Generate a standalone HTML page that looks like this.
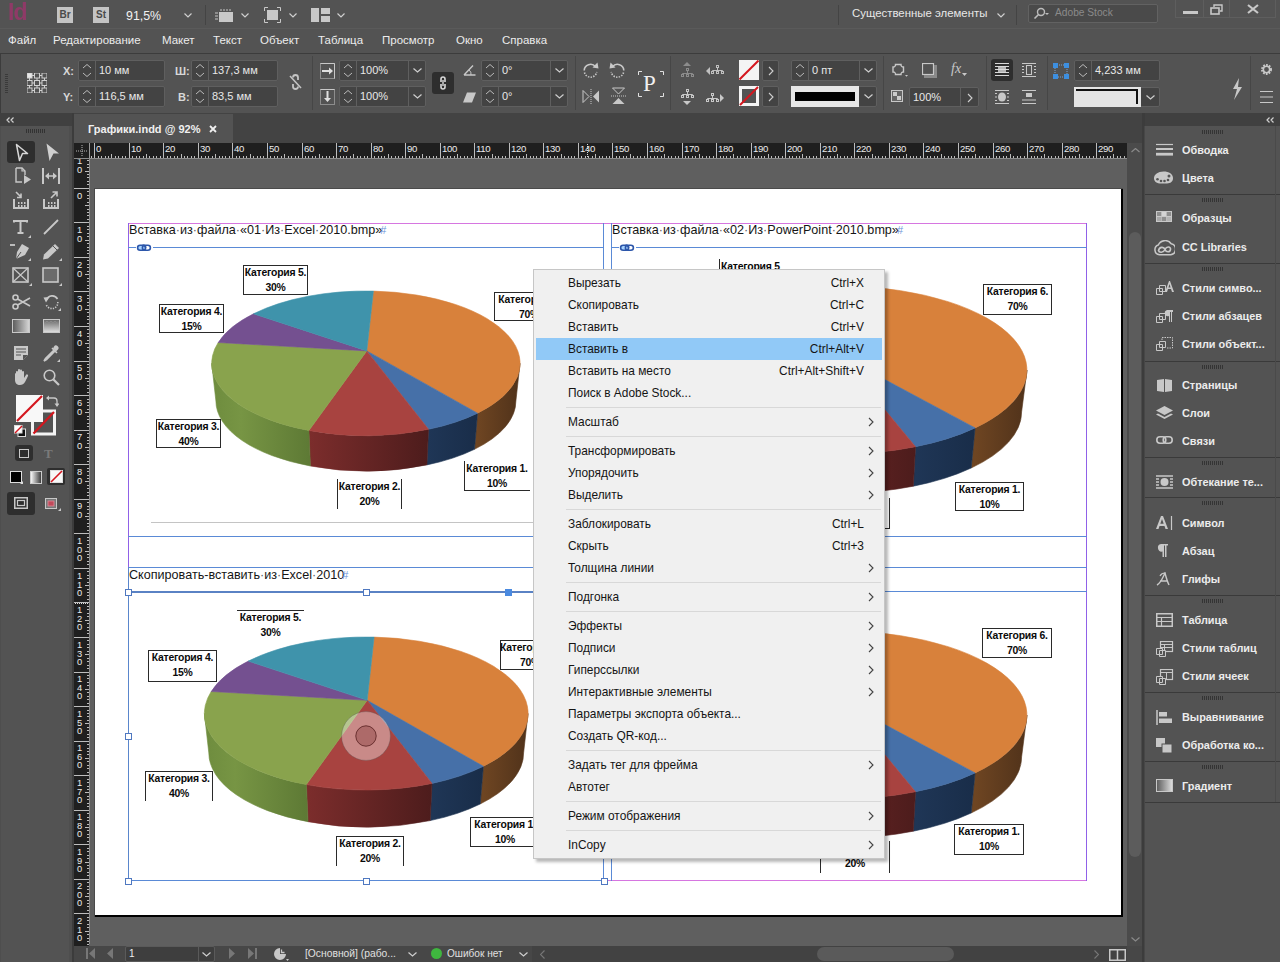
<!DOCTYPE html>
<html><head><meta charset="utf-8">
<style>
*{box-sizing:border-box}
html,body{margin:0;padding:0}
body{width:1280px;height:962px;overflow:hidden;position:relative;background:#535353;font-family:"Liberation Sans",sans-serif;color:#e6e6e6}
.a{position:absolute}
.t{position:absolute;white-space:nowrap;line-height:1}
</style></head><body>


<div class="a" style="left:0;top:0;width:1280px;height:28px;background:#535353"></div>
<div class="a" style="left:0;top:28px;width:1280px;height:1px;background:#5a5a5a"></div>
<div class="a" style="left:0;top:29px;width:1280px;height:24px;background:#535353"></div>
<div class="a" style="left:0;top:53px;width:1280px;height:1px;background:#3c3c3c"></div>
<div class="a" style="left:0;top:54px;width:1280px;height:59px;background:#535353"></div>

<div class="t" style="left:8px;top:1px;font-size:23px;font-weight:700;color:#96386a;opacity:0.9;letter-spacing:-1px;font-family:'Liberation Sans'">Id</div>
<div class="a" style="left:57px;top:7px;width:16px;height:16px;background:#c4c4c4"></div>
<div class="t" style="left:57px;top:10px;width:16px;text-align:center;font-size:10px;font-weight:700;color:#4a4a4a">Br</div>
<div class="a" style="left:93px;top:7px;width:16px;height:16px;background:#c4c4c4"></div>
<div class="t" style="left:93px;top:10px;width:16px;text-align:center;font-size:10px;font-weight:700;color:#4a4a4a">St</div>
<div class="t" style="left:126px;top:10px;font-size:12.4px;color:#f2f2f2">91,5%</div>
<svg class="a" style="left:184px;top:13px" width="8" height="5" viewBox="0 0 8 5"><path d="M0.5 0.5 L4.0 4 L7.5 0.5" fill="none" stroke="#cfcfcf" stroke-width="1.2"/></svg>
<div class="a" style="left:205px;top:5px;width:1px;height:20px;background:#444"></div>
<svg class="a" style="left:214px;top:7px" width="20" height="16" viewBox="0 0 20 16"><rect x="5" y="5" width="14" height="10" fill="#c8c8c8"/><path d="M7 2v2M10 2v2M13 2v2M16 2v2M1 6h3M1 9h3M1 12h3" stroke="#c8c8c8" stroke-width="1"/></svg>
<svg class="a" style="left:241px;top:13px" width="8" height="5" viewBox="0 0 8 5"><path d="M0.5 0.5 L4.0 4 L7.5 0.5" fill="none" stroke="#cfcfcf" stroke-width="1.2"/></svg>
<svg class="a" style="left:264px;top:7px" width="17" height="16" viewBox="0 0 17 16"><rect x="3" y="3" width="11" height="10" fill="#c8c8c8"/><path d="M0.5 4V0.5H4M13 0.5h3.5V4M16.5 12v3.5H13M4 15.5H0.5V12" fill="none" stroke="#c8c8c8"/></svg>
<svg class="a" style="left:289px;top:13px" width="8" height="5" viewBox="0 0 8 5"><path d="M0.5 0.5 L4.0 4 L7.5 0.5" fill="none" stroke="#cfcfcf" stroke-width="1.2"/></svg>
<svg class="a" style="left:311px;top:8px" width="19" height="14" viewBox="0 0 19 14"><rect x="0" y="0" width="8" height="14" fill="#c8c8c8"/><rect x="10" y="0" width="9" height="6" fill="#c8c8c8"/><rect x="10" y="8" width="9" height="6" fill="#c8c8c8"/></svg>
<svg class="a" style="left:337px;top:13px" width="8" height="5" viewBox="0 0 8 5"><path d="M0.5 0.5 L4.0 4 L7.5 0.5" fill="none" stroke="#cfcfcf" stroke-width="1.2"/></svg>
<div class="a" style="left:838px;top:5px;width:1px;height:20px;background:#444"></div>
<div class="t" style="left:852px;top:8px;font-size:11.4px;color:#e8e8e8">Существенные элементы</div>
<svg class="a" style="left:997px;top:13px" width="8" height="5" viewBox="0 0 8 5"><path d="M0.5 0.5 L4.0 4 L7.5 0.5" fill="none" stroke="#cfcfcf" stroke-width="1.2"/></svg>
<div class="a" style="left:1016px;top:5px;width:1px;height:20px;background:#444"></div>
<div class="a" style="left:1028px;top:4px;width:130px;height:19px;background:#4a4a4a;border:1px solid #626262;border-radius:2px"></div>
<svg class="a" style="left:1033px;top:7px" width="16" height="12" viewBox="0 0 16 12"><circle cx="8" cy="5" r="3.5" fill="none" stroke="#bdbdbd" stroke-width="1.4"/><path d="M5.5 7.5L1.5 11.5" stroke="#bdbdbd" stroke-width="1.6"/><path d="M12 6h4l-2 2z" fill="#bdbdbd"/></svg>
<div class="t" style="left:1055px;top:8px;font-size:10.2px;color:#8a8a8a">Adobe Stock</div>
<div class="a" style="left:1175px;top:-1px;width:101px;height:19px;border:1px solid #5e5e5e;background:#535353"></div>
<div class="a" style="left:1203px;top:0;width:1px;height:18px;background:#5e5e5e"></div>
<div class="a" style="left:1229px;top:0;width:1px;height:18px;background:#5e5e5e"></div>
<div class="a" style="left:1183px;top:11px;width:15px;height:3px;background:#c8c8c8"></div>
<svg class="a" style="left:1210px;top:4px" width="14" height="11" viewBox="0 0 14 11"><rect x="1" y="4" width="8" height="6" fill="none" stroke="#c8c8c8" stroke-width="1.6"/><path d="M4 3V1h8v6h-2" fill="none" stroke="#c8c8c8" stroke-width="1.4"/></svg>
<svg class="a" style="left:1247px;top:4px" width="12" height="10" viewBox="0 0 12 10"><path d="M1 1L11 9M11 1L1 9" stroke="#c8c8c8" stroke-width="2.2"/></svg>
<div class="t" style="left:8px;top:35px;font-size:11.5px;color:#ececec">Файл</div>
<div class="t" style="left:53px;top:35px;font-size:11.5px;color:#ececec">Редактирование</div>
<div class="t" style="left:162px;top:35px;font-size:11.5px;color:#ececec">Макет</div>
<div class="t" style="left:213px;top:35px;font-size:11.5px;color:#ececec">Текст</div>
<div class="t" style="left:260px;top:35px;font-size:11.5px;color:#ececec">Объект</div>
<div class="t" style="left:318px;top:35px;font-size:11.5px;color:#ececec">Таблица</div>
<div class="t" style="left:382px;top:35px;font-size:11.5px;color:#ececec">Просмотр</div>
<div class="t" style="left:456px;top:35px;font-size:11.5px;color:#ececec">Окно</div>
<div class="t" style="left:502px;top:35px;font-size:11.5px;color:#ececec">Справка</div>
<div class="a" style="left:0;top:54px;width:1px;height:59px;background:#3c3c3c"></div>
<div class="a" style="left:5px;top:74px;width:3px;height:19px;background:repeating-linear-gradient(#3a3a3a 0 1px,transparent 1px 2px)"></div>
<svg class="a" style="left:27px;top:73px" width="20" height="20" viewBox="0 0 20 20"><path d="M2.5 2.5H17.5M2.5 10H17.5M2.5 17.5H17.5M2.5 2.5V17.5M10 2.5V17.5M17.5 2.5V17.5" stroke="#d0d0d0" stroke-width="1"/><rect x="0.0" y="0.0" width="5" height="5" fill="#e8e8e8" stroke="#d0d0d0" stroke-width="1"/><rect x="0.0" y="7.5" width="5" height="5" fill="#535353" stroke="#d0d0d0" stroke-width="1"/><rect x="0.0" y="15.0" width="5" height="5" fill="#535353" stroke="#d0d0d0" stroke-width="1"/><rect x="7.5" y="0.0" width="5" height="5" fill="#535353" stroke="#d0d0d0" stroke-width="1"/><rect x="7.5" y="7.5" width="5" height="5" fill="#535353" stroke="#d0d0d0" stroke-width="1"/><rect x="7.5" y="15.0" width="5" height="5" fill="#535353" stroke="#d0d0d0" stroke-width="1"/><rect x="15.0" y="0.0" width="5" height="5" fill="#535353" stroke="#d0d0d0" stroke-width="1"/><rect x="15.0" y="7.5" width="5" height="5" fill="#535353" stroke="#d0d0d0" stroke-width="1"/><rect x="15.0" y="15.0" width="5" height="5" fill="#535353" stroke="#d0d0d0" stroke-width="1"/></svg>
<div class="t" style="left:63px;top:66px;font-size:11px;font-weight:700;color:#d8d8d8">X:</div>
<div class="t" style="left:63px;top:92px;font-size:11px;font-weight:700;color:#d8d8d8">Y:</div>
<div class="a" style="left:78px;top:60px;width:87px;height:21px;background:#434343;border:1px solid #5f5f5f;border-radius:2px"></div>
<div class="a" style="left:95px;top:60px;width:1px;height:21px;background:#5f5f5f"></div>
<svg class="a" style="left:82px;top:63px" width="10" height="15" viewBox="0 0 10 15"><path d="M1 5L5 1.5L9 5M1 10L5 13.5L9 10" fill="none" stroke="#bbb" stroke-width="1"/></svg>
<div class="t" style="left:99px;top:65px;font-size:11px;color:#e8e8e8">10 мм</div>
<div class="a" style="left:78px;top:86px;width:87px;height:21px;background:#434343;border:1px solid #5f5f5f;border-radius:2px"></div>
<div class="a" style="left:95px;top:86px;width:1px;height:21px;background:#5f5f5f"></div>
<svg class="a" style="left:82px;top:89px" width="10" height="15" viewBox="0 0 10 15"><path d="M1 5L5 1.5L9 5M1 10L5 13.5L9 10" fill="none" stroke="#bbb" stroke-width="1"/></svg>
<div class="t" style="left:99px;top:91px;font-size:11px;color:#e8e8e8">116,5 мм</div>
<div class="t" style="left:175px;top:66px;font-size:11px;font-weight:700;color:#d8d8d8">Ш:</div>
<div class="t" style="left:178px;top:92px;font-size:11px;font-weight:700;color:#d8d8d8">В:</div>
<div class="a" style="left:191px;top:60px;width:87px;height:21px;background:#434343;border:1px solid #5f5f5f;border-radius:2px"></div>
<div class="a" style="left:208px;top:60px;width:1px;height:21px;background:#5f5f5f"></div>
<svg class="a" style="left:195px;top:63px" width="10" height="15" viewBox="0 0 10 15"><path d="M1 5L5 1.5L9 5M1 10L5 13.5L9 10" fill="none" stroke="#bbb" stroke-width="1"/></svg>
<div class="t" style="left:212px;top:65px;font-size:11px;color:#e8e8e8">137,3 мм</div>
<div class="a" style="left:191px;top:86px;width:87px;height:21px;background:#434343;border:1px solid #5f5f5f;border-radius:2px"></div>
<div class="a" style="left:208px;top:86px;width:1px;height:21px;background:#5f5f5f"></div>
<svg class="a" style="left:195px;top:89px" width="10" height="15" viewBox="0 0 10 15"><path d="M1 5L5 1.5L9 5M1 10L5 13.5L9 10" fill="none" stroke="#bbb" stroke-width="1"/></svg>
<div class="t" style="left:212px;top:91px;font-size:11px;color:#e8e8e8">83,5 мм</div>
<svg class="a" style="left:288px;top:74px" width="15" height="16" viewBox="0 0 15 16"><path d="M5 3.5a2.5 2.5 0 0 1 5 0V6M10 12.5a2.5 2.5 0 0 1-5 0V10" fill="none" stroke="#c4c4c4" stroke-width="1.8"/><path d="M2 2L13 14" stroke="#c4c4c4" stroke-width="1.6"/></svg>
<div class="a" style="left:312px;top:56px;width:1px;height:54px;background:#464646"></div>
<svg class="a" style="left:320px;top:63px" width="15" height="16" viewBox="0 0 15 16"><rect x="0.5" y="0.5" width="14" height="15" fill="none" stroke="#c8c8c8" stroke-dasharray="1 1"/><path d="M0.5 0.5H14.5V15.5" fill="none" stroke="#c8c8c8"/><path d="M2 8H10" stroke="#e0e0e0" stroke-width="2"/><path d="M9 4.5L13 8L9 11.5z" fill="#e0e0e0"/></svg>
<svg class="a" style="left:320px;top:89px" width="15" height="16" viewBox="0 0 15 16"><rect x="0.5" y="0.5" width="14" height="15" fill="none" stroke="#c8c8c8" stroke-dasharray="1 1"/><path d="M0.5 0.5H14.5" fill="none" stroke="#c8c8c8"/><path d="M7.5 2V10" stroke="#e0e0e0" stroke-width="2"/><path d="M4 9L7.5 13L11 9z" fill="#e0e0e0"/></svg>
<div class="a" style="left:339px;top:60px;width:87px;height:21px;background:#434343;border:1px solid #5f5f5f;border-radius:2px"></div>
<div class="a" style="left:356px;top:60px;width:1px;height:21px;background:#5f5f5f"></div>
<svg class="a" style="left:343px;top:63px" width="10" height="15" viewBox="0 0 10 15"><path d="M1 5L5 1.5L9 5M1 10L5 13.5L9 10" fill="none" stroke="#bbb" stroke-width="1"/></svg>
<div class="a" style="left:408px;top:60px;width:1px;height:21px;background:#5f5f5f"></div>
<svg class="a" style="left:413px;top:68px" width="9" height="5" viewBox="0 0 9 5"><path d="M0.5 0.5 L4.5 4 L8.5 0.5" fill="none" stroke="#cfcfcf" stroke-width="1.2"/></svg>
<div class="t" style="left:360px;top:65px;font-size:11px;color:#e8e8e8">100%</div>
<div class="a" style="left:339px;top:86px;width:87px;height:21px;background:#434343;border:1px solid #5f5f5f;border-radius:2px"></div>
<div class="a" style="left:356px;top:86px;width:1px;height:21px;background:#5f5f5f"></div>
<svg class="a" style="left:343px;top:89px" width="10" height="15" viewBox="0 0 10 15"><path d="M1 5L5 1.5L9 5M1 10L5 13.5L9 10" fill="none" stroke="#bbb" stroke-width="1"/></svg>
<div class="a" style="left:408px;top:86px;width:1px;height:21px;background:#5f5f5f"></div>
<svg class="a" style="left:413px;top:94px" width="9" height="5" viewBox="0 0 9 5"><path d="M0.5 0.5 L4.5 4 L8.5 0.5" fill="none" stroke="#cfcfcf" stroke-width="1.2"/></svg>
<div class="t" style="left:360px;top:91px;font-size:11px;color:#e8e8e8">100%</div>
<div class="a" style="left:432px;top:72px;width:22px;height:22px;background:#2e2e2e;border-radius:3px"></div>
<svg class="a" style="left:438px;top:75px" width="10" height="16" viewBox="0 0 10 16"><path d="M3 7V4a2 2 0 0 1 4 0V7M3 9v3a2 2 0 0 0 4 0V9" fill="none" stroke="#d8d8d8" stroke-width="1.6"/><path d="M5 5V11" stroke="#d8d8d8" stroke-width="1.4"/></svg>
<svg class="a" style="left:463px;top:64px" width="13" height="12" viewBox="0 0 13 12"><path d="M1 11H12.5M1 11L10 1.5" fill="none" stroke="#c8c8c8" stroke-width="1.4"/><path d="M6 6a5 5 0 0 1 2 5" fill="none" stroke="#c8c8c8" stroke-width="1"/></svg>
<svg class="a" style="left:463px;top:92px" width="13" height="11" viewBox="0 0 13 11"><path d="M4 0.5H13L9 10.5H0z" fill="#c8c8c8"/></svg>
<div class="a" style="left:481px;top:60px;width:87px;height:21px;background:#434343;border:1px solid #5f5f5f;border-radius:2px"></div>
<div class="a" style="left:498px;top:60px;width:1px;height:21px;background:#5f5f5f"></div>
<svg class="a" style="left:485px;top:63px" width="10" height="15" viewBox="0 0 10 15"><path d="M1 5L5 1.5L9 5M1 10L5 13.5L9 10" fill="none" stroke="#bbb" stroke-width="1"/></svg>
<div class="a" style="left:550px;top:60px;width:1px;height:21px;background:#5f5f5f"></div>
<svg class="a" style="left:555px;top:68px" width="9" height="5" viewBox="0 0 9 5"><path d="M0.5 0.5 L4.5 4 L8.5 0.5" fill="none" stroke="#cfcfcf" stroke-width="1.2"/></svg>
<div class="t" style="left:502px;top:65px;font-size:11px;color:#e8e8e8">0°</div>
<div class="a" style="left:481px;top:86px;width:87px;height:21px;background:#434343;border:1px solid #5f5f5f;border-radius:2px"></div>
<div class="a" style="left:498px;top:86px;width:1px;height:21px;background:#5f5f5f"></div>
<svg class="a" style="left:485px;top:89px" width="10" height="15" viewBox="0 0 10 15"><path d="M1 5L5 1.5L9 5M1 10L5 13.5L9 10" fill="none" stroke="#bbb" stroke-width="1"/></svg>
<div class="a" style="left:550px;top:86px;width:1px;height:21px;background:#5f5f5f"></div>
<svg class="a" style="left:555px;top:94px" width="9" height="5" viewBox="0 0 9 5"><path d="M0.5 0.5 L4.5 4 L8.5 0.5" fill="none" stroke="#cfcfcf" stroke-width="1.2"/></svg>
<div class="t" style="left:502px;top:91px;font-size:11px;color:#e8e8e8">0°</div>
<div class="a" style="left:575px;top:56px;width:1px;height:54px;background:#464646"></div>
<svg class="a" style="left:582px;top:62px" width="17" height="17" viewBox="0 0 17 17"><path d="M2.2 8.5A6.3 6.3 0 0 1 13.5 4.8" fill="none" stroke="#c8c8c8" stroke-width="1.6"/><path d="M2.5 10.5A6.3 6.3 0 0 0 14.8 10" fill="none" stroke="#c8c8c8" stroke-width="1.6" stroke-dasharray="1.4 1.3"/><path d="M10.5 5.5L16.5 6.5L15.5 0.5z" fill="#c8c8c8"/></svg>
<svg class="a" style="left:609px;top:62px" width="17" height="17" viewBox="0 0 17 17"><path d="M14.8 8.5A6.3 6.3 0 0 0 3.5 4.8" fill="none" stroke="#c8c8c8" stroke-width="1.6"/><path d="M14.5 10.5A6.3 6.3 0 0 1 2.2 10" fill="none" stroke="#c8c8c8" stroke-width="1.6" stroke-dasharray="1.4 1.3"/><path d="M6.5 5.5L0.5 6.5L1.5 0.5z" fill="#c8c8c8"/></svg>
<svg class="a" style="left:582px;top:89px" width="18" height="15" viewBox="0 0 18 15"><path d="M1 1.5L7 7.5L1 13.5z" fill="none" stroke="#c8c8c8" stroke-width="1"/><path d="M17 1.5L11 7.5L17 13.5z" fill="#c8c8c8"/><path d="M9 0V15" stroke="#c8c8c8" stroke-dasharray="1 1"/></svg>
<svg class="a" style="left:611px;top:87px" width="15" height="18" viewBox="0 0 15 18"><path d="M1.5 1L7.5 7L13.5 1z" fill="none" stroke="#c8c8c8" stroke-width="1"/><path d="M1.5 17L7.5 11L13.5 17z" fill="#c8c8c8"/><path d="M0 9H15" stroke="#c8c8c8" stroke-dasharray="1 1"/></svg>
<svg class="a" style="left:638px;top:71px" width="26" height="26" viewBox="0 0 26 26"><path d="M0.5 4V0.5H4M22 0.5H25.5V4M25.5 22V25.5H22M4 25.5H0.5V22" fill="none" stroke="#e0e0e0" stroke-width="1"/></svg>
<div class="t" style="left:643px;top:72px;font-family:'Liberation Serif';font-size:23px;color:#f0f0f0">P</div>
<div class="a" style="left:670px;top:56px;width:1px;height:54px;background:#464646"></div>
<svg class="a" style="left:670px;top:55px" width="60" height="55" viewBox="670 55 60 55"><path d="M683 66L687 62L691 66z" fill="#8c8c8c"/><g fill="none" stroke="#8c8c8c" stroke-width="1"><rect x="686.5" y="68.5" width="2" height="2"/><path d="M687.5 71V73M682.5 74V73.5H692.5V74"/><rect x="681.5" y="74.5" width="2" height="2"/><rect x="686.5" y="74.5" width="2" height="2"/><rect x="691.5" y="74.5" width="2" height="2"/></g><path d="M710 67L706 71L710 75z" fill="#c0c0c0"/><g fill="none" stroke="#c0c0c0" stroke-width="1"><rect x="716.5" y="65.5" width="2" height="2"/><path d="M717.5 68V70M712.5 71V70.5H722.5V71"/><rect x="711.5" y="71.5" width="2" height="2"/><rect x="716.5" y="71.5" width="2" height="2"/><rect x="721.5" y="71.5" width="2" height="2"/></g><g fill="none" stroke="#c8c8c8" stroke-width="1"><rect x="686.5" y="89.5" width="2" height="2"/><path d="M687.5 92V94M682.5 95V94.5H692.5V95"/><rect x="681.5" y="95.5" width="2" height="2"/><rect x="686.5" y="95.5" width="2" height="2"/><rect x="691.5" y="95.5" width="2" height="2"/></g><path d="M683 101L687 105L691 101z" fill="#c8c8c8"/><g fill="none" stroke="#c8c8c8" stroke-width="1"><rect x="711.5" y="93.5" width="2" height="2"/><path d="M712.5 96V98M707.5 99V98.5H717.5V99"/><rect x="706.5" y="99.5" width="2" height="2"/><rect x="711.5" y="99.5" width="2" height="2"/><rect x="716.5" y="99.5" width="2" height="2"/></g><path d="M720 94L724 98L720 102z" fill="#c8c8c8"/></svg>
<svg class="a" style="left:739px;top:60px" width="20" height="20" viewBox="0 0 20 20"><rect x="0" y="0" width="20" height="20" fill="#f4f4f4"/><path d="M0.5 19.5L19.5 0.5" stroke="#d4161e" stroke-width="2"/></svg>
<svg class="a" style="left:739px;top:86px" width="20" height="20" viewBox="0 0 20 20"><rect x="1.5" y="1.5" width="17" height="17" fill="#535353" stroke="#f4f4f4" stroke-width="3"/><path d="M1 19L19 1" stroke="#d4161e" stroke-width="2"/></svg>
<div class="a" style="left:762px;top:60px;width:17px;height:21px;background:#434343;border:1px solid #5f5f5f;border-radius:2px"></div>
<svg class="a" style="left:768px;top:66px" width="6" height="10" viewBox="0 0 6 10"><path d="M1 1L5 5L1 9" fill="none" stroke="#cfcfcf" stroke-width="1.1"/></svg>
<div class="a" style="left:762px;top:86px;width:17px;height:21px;background:#434343;border:1px solid #5f5f5f;border-radius:2px"></div>
<svg class="a" style="left:768px;top:92px" width="6" height="10" viewBox="0 0 6 10"><path d="M1 1L5 5L1 9" fill="none" stroke="#cfcfcf" stroke-width="1.1"/></svg>
<div class="a" style="left:791px;top:60px;width:86px;height:21px;background:#434343;border:1px solid #5f5f5f;border-radius:2px"></div>
<div class="a" style="left:808px;top:60px;width:1px;height:21px;background:#5f5f5f"></div>
<svg class="a" style="left:795px;top:63px" width="10" height="15" viewBox="0 0 10 15"><path d="M1 5L5 1.5L9 5M1 10L5 13.5L9 10" fill="none" stroke="#bbb" stroke-width="1"/></svg>
<div class="a" style="left:859px;top:60px;width:1px;height:21px;background:#5f5f5f"></div>
<svg class="a" style="left:864px;top:68px" width="9" height="5" viewBox="0 0 9 5"><path d="M0.5 0.5 L4.5 4 L8.5 0.5" fill="none" stroke="#cfcfcf" stroke-width="1.2"/></svg>
<div class="t" style="left:812px;top:65px;font-size:11px;color:#e8e8e8">0 пт</div>
<div class="a" style="left:791px;top:86px;width:86px;height:21px;background:#434343;border:1px solid #5f5f5f;border-radius:2px"></div>
<div class="a" style="left:791px;top:86px;width:68px;height:21px;background:#e6e6e6"></div>
<div class="a" style="left:795px;top:92px;width:60px;height:9px;background:#000"></div>
<svg class="a" style="left:864px;top:94px" width="9" height="5" viewBox="0 0 9 5"><path d="M0.5 0.5 L4.5 4 L8.5 0.5" fill="none" stroke="#cfcfcf" stroke-width="1.2"/></svg>
<div class="a" style="left:883px;top:56px;width:1px;height:54px;background:#464646"></div>
<svg class="a" style="left:892px;top:63px" width="17" height="14" viewBox="0 0 17 14"><path d="M3.5 1.5H9A2.2 2.2 0 0 0 11.5 4V9A2.2 2.2 0 0 0 9 11.5H3.5A2.2 2.2 0 0 0 1 9V4A2.2 2.2 0 0 0 3.5 1.5z" fill="none" stroke="#c8c8c8" stroke-width="1.4"/><path d="M13 12h3l-1.5 1.8z" fill="#c8c8c8"/></svg>
<svg class="a" style="left:922px;top:63px" width="15" height="15" viewBox="0 0 15 15"><rect x="0.5" y="0.5" width="11" height="11" fill="none" stroke="#c8c8c8" stroke-width="1.2"/><rect x="2" y="12" width="13" height="3" fill="#8a8a8a"/><rect x="12" y="2" width="3" height="13" fill="#8a8a8a"/></svg>
<div class="t" style="left:951px;top:62px;font-family:'Liberation Serif';font-style:italic;font-size:14px;color:#c8c8c8">fx</div>
<svg class="a" style="left:962px;top:73px" width="5" height="3"><path d="M0 0h5l-2.5 3z" fill="#c8c8c8"/></svg>
<svg class="a" style="left:891px;top:90px" width="12" height="12" viewBox="0 0 12 12"><rect x="0.5" y="0.5" width="11" height="11" fill="#666" stroke="#c8c8c8"/><rect x="2" y="2" width="4" height="4" fill="#ccc"/><rect x="6" y="6" width="4" height="4" fill="#ccc"/></svg>
<div class="a" style="left:909px;top:87px;width:70px;height:20px;background:#434343;border:1px solid #5f5f5f;border-radius:2px"></div>
<div class="a" style="left:960px;top:87px;width:1px;height:20px;background:#5f5f5f"></div>
<svg class="a" style="left:967px;top:93px" width="6" height="10" viewBox="0 0 6 10"><path d="M1 1L5 5L1 9" fill="none" stroke="#cfcfcf" stroke-width="1.1"/></svg>
<div class="t" style="left:913px;top:92px;font-size:11px;color:#e8e8e8">100%</div>
<div class="a" style="left:986px;top:56px;width:1px;height:54px;background:#464646"></div>
<div class="a" style="left:991px;top:59px;width:22px;height:22px;background:#2e2e2e;border-radius:3px"></div>
<svg class="a" style="left:994px;top:62px" width="16" height="16" viewBox="0 0 16 16"><path d="M1 1.5H15M1 4.5H15M1 7.5H15M1 10.5H15M1 13.5H15" stroke="#d8d8d8" stroke-width="1"/><rect x="4" y="5" width="8" height="5" fill="#d8d8d8" opacity="0.8"/></svg>
<svg class="a" style="left:1021px;top:62px" width="16" height="16" viewBox="0 0 16 16"><path d="M1 1.5H15M1 14.5H15M1 4.5H3M1 7.5H3M1 10.5H3M13 4.5H15M13 7.5H15M13 10.5H15" stroke="#c8c8c8" stroke-width="1"/><rect x="5.5" y="3.5" width="5" height="9" fill="none" stroke="#c8c8c8"/></svg>
<svg class="a" style="left:994px;top:89px" width="16" height="16" viewBox="0 0 16 16"><path d="M1 1.5H15M1 14.5H15M1 4.5H3M1 8H3M1 11.5H3M13 4.5H15M13 8H15M13 11.5H15" stroke="#c8c8c8" stroke-width="1"/><ellipse cx="8" cy="8" rx="4" ry="4.5" fill="#c8c8c8"/></svg>
<svg class="a" style="left:1021px;top:89px" width="16" height="16" viewBox="0 0 16 16"><path d="M1 1.5H15M1 11H15M1 14.5H15" stroke="#c8c8c8" stroke-width="1"/><rect x="5" y="4" width="6" height="4" fill="#c8c8c8"/></svg>
<div class="a" style="left:1047px;top:56px;width:1px;height:54px;background:#464646"></div>
<svg class="a" style="left:1053px;top:63px" width="16" height="16" viewBox="0 0 16 16"><path d="M2 2H14V14H2z" fill="none" stroke="#7aa6d6" stroke-dasharray="1 1"/><rect x="0" y="0" width="5" height="5" fill="#3d8fe0"/><rect x="11" y="0" width="5" height="5" fill="#3d8fe0"/><rect x="0" y="11" width="5" height="5" fill="#3d8fe0"/><rect x="11" y="11" width="5" height="5" fill="#3d8fe0"/></svg>
<div class="a" style="left:1074px;top:60px;width:86px;height:21px;background:#434343;border:1px solid #5f5f5f;border-radius:2px"></div>
<div class="a" style="left:1091px;top:60px;width:1px;height:21px;background:#5f5f5f"></div>
<svg class="a" style="left:1078px;top:63px" width="10" height="15" viewBox="0 0 10 15"><path d="M1 5L5 1.5L9 5M1 10L5 13.5L9 10" fill="none" stroke="#bbb" stroke-width="1"/></svg>
<div class="t" style="left:1095px;top:65px;font-size:11px;color:#e8e8e8">4,233 мм</div>
<div class="a" style="left:1074px;top:87px;width:86px;height:20px;background:#434343;border:1px solid #5f5f5f;border-radius:2px"></div>
<div class="a" style="left:1074px;top:87px;width:67px;height:20px;background:#e4e4e4"></div>
<div class="a" style="left:1076px;top:89px;width:62px;height:2px;background:#111"></div>
<div class="a" style="left:1136px;top:89px;width:2px;height:15px;background:#111"></div>
<svg class="a" style="left:1146px;top:95px" width="9" height="5" viewBox="0 0 9 5"><path d="M0.5 0.5 L4.5 4 L8.5 0.5" fill="none" stroke="#cfcfcf" stroke-width="1.2"/></svg>
<svg class="a" style="left:1231px;top:78px" width="12" height="22" viewBox="0 0 12 22"><path d="M8 0L2 11H6L3 22L11 9H7z" fill="#c8c8c8"/></svg>
<div class="a" style="left:1250px;top:56px;width:1px;height:54px;background:#464646"></div>
<svg class="a" style="left:1260px;top:63px" width="13" height="13" viewBox="0 0 13 13"><circle cx="6.5" cy="6.5" r="4.2" fill="none" stroke="#c8c8c8" stroke-width="2.6" stroke-dasharray="1.6 1.1"/><circle cx="6.5" cy="6.5" r="3.2" fill="none" stroke="#c8c8c8" stroke-width="1.6"/></svg>
<svg class="a" style="left:1260px;top:90px" width="13" height="14" viewBox="0 0 13 14"><path d="M0 1.5H13M0 7H13M0 12.5H13" stroke="#c8c8c8" stroke-width="1.2"/></svg>
<div class="a" style="left:72px;top:113px;width:1073px;height:30px;background:#434343"></div>
<div class="a" style="left:74px;top:114px;width:159px;height:29px;background:#535353"></div>
<div class="t" style="left:88px;top:124px;font-size:11px;font-weight:700;color:#f0f0f0">Графики.indd @ 92%</div>
<svg class="a" style="left:209px;top:125px" width="8" height="8" viewBox="0 0 8 8"><path d="M1 1L7 7M7 1L1 7" stroke="#f0f0f0" stroke-width="1.8"/></svg>
<div class="a" style="left:0;top:113px;width:72px;height:849px;background:#4e4e4e"></div>
<div class="a" style="left:1px;top:126px;width:68px;height:836px;background:#535353"></div>
<div class="a" style="left:0;top:113px;width:72px;height:13px;background:#404040"></div>
<svg class="a" style="left:6px;top:117px" width="8" height="6" viewBox="0 0 8 6"><path d="M3.5 0.5L1 3L3.5 5.5M7.5 0.5L5 3L7.5 5.5" fill="none" stroke="#d0d0d0" stroke-width="1.2"/></svg>
<div class="a" style="left:72px;top:113px;width:2px;height:849px;background:#3c3c3c"></div>
<div class="a" style="left:26px;top:129px;width:20px;height:4px;background:repeating-linear-gradient(90deg,#333 0 1px,transparent 1px 2px)"></div>
<div class="a" style="left:7px;top:141px;width:28px;height:22px;background:#2e2e2e;border-radius:3px"></div>
<svg class="a" style="left:15px;top:143px" width="14" height="19" viewBox="0 0 14 19"><path d="M1.5 1.5L12.5 10.5H7.5L4.5 17.5L1.5 1.5z" fill="none" stroke="#d8d8d8" stroke-width="1.5" stroke-linejoin="round"/></svg>
<svg class="a" style="left:46px;top:143px" width="14" height="19" viewBox="0 0 14 19"><path d="M0.5 0.5L13 10.5H7.5L3.5 18z" fill="#d0d0d0"/></svg>
<svg class="a" style="left:15px;top:167px" width="16" height="17" viewBox="0 0 16 17"><path d="M1 1H7L10 4V8M7 15H1V1" fill="none" stroke="#c8c8c8" stroke-width="1.4"/><path d="M7 1V4H10" fill="none" stroke="#c8c8c8" stroke-width="1.2"/><path d="M9 8L16 12.5L9 17z" fill="#c8c8c8"/></svg>
<svg class="a" style="left:42px;top:168px" width="18" height="16" viewBox="0 0 18 16"><path d="M1 0V16M17 0V16" stroke="#c8c8c8" stroke-width="2"/><path d="M4 8H14" stroke="#c8c8c8" stroke-width="1.5"/><path d="M3 8L7 4.5V11.5zM15 8L11 4.5V11.5z" fill="#c8c8c8"/></svg>
<svg class="a" style="left:13px;top:191px" width="16" height="18" viewBox="0 0 16 18"><path d="M1 8V17H15V8" fill="none" stroke="#c8c8c8" stroke-width="2"/><path d="M5 12h1.5M8 12h1.5M11 12h1.5M5 15h1.5M8 15h1.5M11 15h1.5" stroke="#c8c8c8" stroke-width="1.8"/><path d="M3 1L8 6M8 2.5V6.5H4" fill="none" stroke="#c8c8c8" stroke-width="1.6"/></svg>
<svg class="a" style="left:43px;top:191px" width="16" height="18" viewBox="0 0 16 18"><path d="M1 8V17H15V8" fill="none" stroke="#c8c8c8" stroke-width="2"/><path d="M5 12h1.5M8 12h1.5M11 12h1.5M5 15h1.5M8 15h1.5M11 15h1.5" stroke="#c8c8c8" stroke-width="1.8"/><path d="M8 7L14 1M9.5 1H14V5.5" fill="none" stroke="#c8c8c8" stroke-width="1.6"/></svg>
<svg class="a" style="left:13px;top:220px" width="20" height="18" viewBox="0 0 20 18"><path d="M1 2.5V1H14V2.5M7.5 1V13M4.5 13H10.5" fill="none" stroke="#c8c8c8" stroke-width="2"/><path d="M18 15V18H15z" fill="#c8c8c8"/></svg>
<svg class="a" style="left:43px;top:219px" width="16" height="16" viewBox="0 0 16 16"><path d="M1 15L15 1" stroke="#c8c8c8" stroke-width="1.8"/></svg>
<svg class="a" style="left:10px;top:243px" width="23" height="18" viewBox="0 0 23 18"><path d="M0 2H5" stroke="#c8c8c8" stroke-width="1.8"/><path d="M12 1L19 5L15 12L6 16L7 9z" fill="#c8c8c8"/><path d="M6 16L11 9" stroke="#535353" stroke-width="1"/><path d="M21 15V18H18z" fill="#c8c8c8"/></svg>
<svg class="a" style="left:42px;top:243px" width="20" height="18" viewBox="0 0 20 18"><path d="M13 1L17 5L6 15.5L1 16.5L2 11.5z" fill="#c8c8c8"/><path d="M11 3L15 7" stroke="#535353" stroke-width="1"/><path d="M20 15V18H17z" fill="#c8c8c8"/></svg>
<svg class="a" style="left:12px;top:267px" width="21" height="19" viewBox="0 0 21 19"><rect x="1" y="1" width="15" height="14" fill="none" stroke="#c8c8c8" stroke-width="1.6"/><path d="M1 1L16 15M16 1L1 15" stroke="#c8c8c8" stroke-width="1.2"/><path d="M20 16V19H17z" fill="#c8c8c8"/></svg>
<svg class="a" style="left:42px;top:267px" width="21" height="19" viewBox="0 0 21 19"><rect x="1" y="1" width="15" height="14" fill="#6b6b6b" stroke="#c8c8c8" stroke-width="1.6"/><path d="M20 16V19H17z" fill="#c8c8c8"/></svg>
<svg class="a" style="left:12px;top:294px" width="19" height="16" viewBox="0 0 19 16"><circle cx="3.5" cy="3.5" r="2.5" fill="none" stroke="#c8c8c8" stroke-width="1.6"/><circle cx="3.5" cy="12.5" r="2.5" fill="none" stroke="#c8c8c8" stroke-width="1.6"/><path d="M5.5 5L18 12M5.5 11L18 4" stroke="#c8c8c8" stroke-width="1.6"/></svg>
<svg class="a" style="left:43px;top:294px" width="19" height="17" viewBox="0 0 19 17"><path d="M3.5 6A6 6 0 0 1 14.5 5" fill="none" stroke="#c8c8c8" stroke-width="1.6"/><path d="M14.8 8A6 6 0 0 1 3 10" fill="none" stroke="#c8c8c8" stroke-width="1.6" stroke-dasharray="1.3 1.2"/><path d="M0.5 3.5L6.5 3L3 8.5z" fill="#c8c8c8"/><path d="M18 14V17H15z" fill="#c8c8c8"/></svg>
<svg class="a" style="left:12px;top:319px" width="18" height="14" viewBox="0 0 18 14"><defs><linearGradient id="tg1" x1="0" x2="1"><stop offset="0" stop-color="#5a5a5a"/><stop offset="1" stop-color="#d8d8d8"/></linearGradient></defs><rect x="0.5" y="0.5" width="17" height="13" fill="url(#tg1)" stroke="#c8c8c8"/></svg>
<svg class="a" style="left:43px;top:319px" width="17" height="14" viewBox="0 0 17 14"><defs><linearGradient id="tg2" x1="0" x2="0" y1="0" y2="1"><stop offset="0" stop-color="#666"/><stop offset="1" stop-color="#e0e0e0"/></linearGradient></defs><rect x="0.5" y="0.5" width="16" height="13" fill="url(#tg2)" stroke="#c8c8c8"/><path d="M2 4l2-2 2 2 2-2 2 2 2-2 2 2" fill="none" stroke="#888" stroke-width="1"/></svg>
<svg class="a" style="left:14px;top:346px" width="15" height="14" viewBox="0 0 15 14"><path d="M0 0H14V9L9 14H0z" fill="#c8c8c8"/><path d="M2 3H12M2 6H12M2 9H7" stroke="#535353" stroke-width="1.2"/><path d="M9 14V9H14" fill="#535353"/></svg>
<svg class="a" style="left:42px;top:345px" width="18" height="17" viewBox="0 0 18 17"><path d="M12 1.5a2.5 2.5 0 0 1 4 3L14 6.5 11 3.5z" fill="#c8c8c8"/><path d="M10 3L15 8M12 5L3.5 13.5 2 16 4.5 14.5 13 6" fill="none" stroke="#c8c8c8" stroke-width="1.6"/><path d="M18 14V17H15z" fill="#c8c8c8"/></svg>
<svg class="a" style="left:12px;top:368px" width="18" height="17" viewBox="0 0 18 17"><path d="M4 9V4a1 1 0 0 1 2 0V8V2a1 1 0 0 1 2 0V8V2.5a1 1 0 0 1 2 0V8V4a1 1 0 0 1 2 0V10l2-3a1 1 0 0 1 2 1l-3 6c-1 2-3 3-5 3-3 0-5-2-5-5V6a1 1 0 0 1 2 0z" fill="#c8c8c8"/></svg>
<svg class="a" style="left:43px;top:369px" width="17" height="17" viewBox="0 0 17 17"><circle cx="6.5" cy="6.5" r="5.3" fill="none" stroke="#c8c8c8" stroke-width="1.6"/><path d="M10.5 10.5L16 16" stroke="#c8c8c8" stroke-width="2.2"/></svg>
<svg class="a" style="left:14px;top:394px" width="46" height="44" viewBox="0 0 46 44"><rect x="18.5" y="17" width="22" height="23" fill="none" stroke="#f4f4f4" stroke-width="3"/><path d="M19.5 39.5L40 18" stroke="#d4161e" stroke-width="2.2"/><rect x="2" y="1" width="27" height="27" fill="#f8f8f8"/><path d="M3 27L28 2" stroke="#d4161e" stroke-width="2.2"/></svg>
<svg class="a" style="left:46px;top:395px" width="13" height="12" viewBox="0 0 13 12"><path d="M1 3H8a3 3 0 0 1 3 3V9" fill="none" stroke="#c8c8c8" stroke-width="1.3"/><path d="M0 3L3 0.5V5.5zM11 12L8.5 8.5H13.5z" fill="#c8c8c8"/></svg>
<svg class="a" style="left:14px;top:425px" width="12" height="12" viewBox="0 0 12 12"><rect x="4" y="4" width="7.5" height="7.5" fill="#111" stroke="#ddd"/><rect x="0.5" y="0.5" width="7.5" height="7.5" fill="#fff" stroke="#ddd"/><path d="M1 8L8 1" stroke="#d4161e" stroke-width="1.4"/></svg>
<div class="a" style="left:15px;top:445px;width:18px;height:16px;background:#2e2e2e;border-radius:3px"></div>
<div class="a" style="left:19px;top:449px;width:10px;height:9px;border:1.5px solid #c8c8c8"></div>
<div class="t" style="left:44px;top:447px;font-family:'Liberation Serif';font-weight:700;font-size:13px;color:#7a7a7a">T</div>
<div class="a" style="left:10px;top:471px;width:12px;height:12px;background:#000;border:1px solid #ddd"></div>
<svg class="a" style="left:20px;top:481px" width="3" height="3"><path d="M3 0V3H0z" fill="#ddd"/></svg>
<svg class="a" style="left:30px;top:471px" width="12" height="13" viewBox="0 0 12 13"><defs><linearGradient id="tg3" x1="0" x2="1"><stop offset="0" stop-color="#fff"/><stop offset="1" stop-color="#333"/></linearGradient></defs><rect x="0.5" y="0.5" width="11" height="12" fill="url(#tg3)" stroke="#ccc"/></svg>
<div class="a" style="left:47px;top:468px;width:18px;height:17px;background:#2e2e2e;border-radius:2px"></div>
<svg class="a" style="left:50px;top:470px" width="13" height="13" viewBox="0 0 13 13"><rect x="0.5" y="0.5" width="12" height="12" fill="#f8f8f8" stroke="#ddd"/><path d="M1 12L12 1" stroke="#d4161e" stroke-width="1.6"/></svg>
<div class="a" style="left:7px;top:492px;width:28px;height:23px;background:#2e2e2e;border-radius:3px"></div>
<svg class="a" style="left:14px;top:497px" width="14" height="12" viewBox="0 0 14 12"><rect x="0.75" y="0.75" width="12.5" height="10.5" fill="none" stroke="#c8c8c8" stroke-width="1.5"/><rect x="3.5" y="3.5" width="7" height="5" fill="none" stroke="#c8c8c8" stroke-width="1.2"/></svg>
<svg class="a" style="left:45px;top:498px" width="16" height="13" viewBox="0 0 16 13"><rect x="0.5" y="0.5" width="11" height="10" fill="#777" stroke="#c8c8c8"/><rect x="3" y="3" width="6" height="5" fill="#c04a5a" stroke="#e08a9a" stroke-width="0.8"/><path d="M16 10V13H13z" fill="#c8c8c8"/></svg>
<div class="a" style="left:74px;top:143px;width:1053px;height:15px;background:#1f1f1f"></div>
<div class="a" style="left:74px;top:143px;width:15px;height:803px;background:#1f1f1f"></div>
<div class="a" style="left:89px;top:143px;width:1px;height:15px;background:#9a9a9a"></div>
<svg class="a" style="left:76px;top:145px" width="12" height="12"><path d="M6 0V12M0 6H12" stroke="#bbb" stroke-dasharray="1 1"/></svg>
<svg class="a" style="left:89px;top:143px" width="1038" height="15"><g stroke="#bdbdbd" stroke-width="1"><path d="M2.5 13V15"/><path d="M5.5 0V15"/><path d="M9.5 13V15"/><path d="M12.5 13V15"/><path d="M16.5 13V15"/><path d="M19.5 13V15"/><path d="M22.5 11V15"/><path d="M26.5 13V15"/><path d="M29.5 13V15"/><path d="M33.5 13V15"/><path d="M36.5 13V15"/><path d="M40.5 0V15"/><path d="M43.5 13V15"/><path d="M47.5 13V15"/><path d="M50.5 13V15"/><path d="M54.5 13V15"/><path d="M57.5 11V15"/><path d="M60.5 13V15"/><path d="M64.5 13V15"/><path d="M67.5 13V15"/><path d="M71.5 13V15"/><path d="M74.5 0V15"/><path d="M78.5 13V15"/><path d="M81.5 13V15"/><path d="M85.5 13V15"/><path d="M88.5 13V15"/><path d="M92.5 11V15"/><path d="M95.5 13V15"/><path d="M98.5 13V15"/><path d="M102.5 13V15"/><path d="M105.5 13V15"/><path d="M109.5 0V15"/><path d="M112.5 13V15"/><path d="M116.5 13V15"/><path d="M119.5 13V15"/><path d="M123.5 13V15"/><path d="M126.5 11V15"/><path d="M130.5 13V15"/><path d="M133.5 13V15"/><path d="M136.5 13V15"/><path d="M140.5 13V15"/><path d="M143.5 0V15"/><path d="M147.5 13V15"/><path d="M150.5 13V15"/><path d="M154.5 13V15"/><path d="M157.5 13V15"/><path d="M161.5 11V15"/><path d="M164.5 13V15"/><path d="M168.5 13V15"/><path d="M171.5 13V15"/><path d="M174.5 13V15"/><path d="M178.5 0V15"/><path d="M181.5 13V15"/><path d="M185.5 13V15"/><path d="M188.5 13V15"/><path d="M192.5 13V15"/><path d="M195.5 11V15"/><path d="M199.5 13V15"/><path d="M202.5 13V15"/><path d="M206.5 13V15"/><path d="M209.5 13V15"/><path d="M213.5 0V15"/><path d="M216.5 13V15"/><path d="M219.5 13V15"/><path d="M223.5 13V15"/><path d="M226.5 13V15"/><path d="M230.5 11V15"/><path d="M233.5 13V15"/><path d="M237.5 13V15"/><path d="M240.5 13V15"/><path d="M244.5 13V15"/><path d="M247.5 0V15"/><path d="M251.5 13V15"/><path d="M254.5 13V15"/><path d="M257.5 13V15"/><path d="M261.5 13V15"/><path d="M264.5 11V15"/><path d="M268.5 13V15"/><path d="M271.5 13V15"/><path d="M275.5 13V15"/><path d="M278.5 13V15"/><path d="M282.5 0V15"/><path d="M285.5 13V15"/><path d="M289.5 13V15"/><path d="M292.5 13V15"/><path d="M295.5 13V15"/><path d="M299.5 11V15"/><path d="M302.5 13V15"/><path d="M306.5 13V15"/><path d="M309.5 13V15"/><path d="M313.5 13V15"/><path d="M316.5 0V15"/><path d="M320.5 13V15"/><path d="M323.5 13V15"/><path d="M327.5 13V15"/><path d="M330.5 13V15"/><path d="M333.5 11V15"/><path d="M337.5 13V15"/><path d="M340.5 13V15"/><path d="M344.5 13V15"/><path d="M347.5 13V15"/><path d="M351.5 0V15"/><path d="M354.5 13V15"/><path d="M358.5 13V15"/><path d="M361.5 13V15"/><path d="M365.5 13V15"/><path d="M368.5 11V15"/><path d="M371.5 13V15"/><path d="M375.5 13V15"/><path d="M378.5 13V15"/><path d="M382.5 13V15"/><path d="M385.5 0V15"/><path d="M389.5 13V15"/><path d="M392.5 13V15"/><path d="M396.5 13V15"/><path d="M399.5 13V15"/><path d="M403.5 11V15"/><path d="M406.5 13V15"/><path d="M409.5 13V15"/><path d="M413.5 13V15"/><path d="M416.5 13V15"/><path d="M420.5 0V15"/><path d="M423.5 13V15"/><path d="M427.5 13V15"/><path d="M430.5 13V15"/><path d="M434.5 13V15"/><path d="M437.5 11V15"/><path d="M441.5 13V15"/><path d="M444.5 13V15"/><path d="M447.5 13V15"/><path d="M451.5 13V15"/><path d="M454.5 0V15"/><path d="M458.5 13V15"/><path d="M461.5 13V15"/><path d="M465.5 13V15"/><path d="M468.5 13V15"/><path d="M472.5 11V15"/><path d="M475.5 13V15"/><path d="M479.5 13V15"/><path d="M482.5 13V15"/><path d="M485.5 13V15"/><path d="M489.5 0V15"/><path d="M492.5 13V15"/><path d="M496.5 13V15"/><path d="M499.5 13V15"/><path d="M503.5 13V15"/><path d="M506.5 11V15"/><path d="M510.5 13V15"/><path d="M513.5 13V15"/><path d="M517.5 13V15"/><path d="M520.5 13V15"/><path d="M523.5 0V15"/><path d="M527.5 13V15"/><path d="M530.5 13V15"/><path d="M534.5 13V15"/><path d="M537.5 13V15"/><path d="M541.5 11V15"/><path d="M544.5 13V15"/><path d="M548.5 13V15"/><path d="M551.5 13V15"/><path d="M555.5 13V15"/><path d="M558.5 0V15"/><path d="M561.5 13V15"/><path d="M565.5 13V15"/><path d="M568.5 13V15"/><path d="M572.5 13V15"/><path d="M575.5 11V15"/><path d="M579.5 13V15"/><path d="M582.5 13V15"/><path d="M586.5 13V15"/><path d="M589.5 13V15"/><path d="M593.5 0V15"/><path d="M596.5 13V15"/><path d="M599.5 13V15"/><path d="M603.5 13V15"/><path d="M606.5 13V15"/><path d="M610.5 11V15"/><path d="M613.5 13V15"/><path d="M617.5 13V15"/><path d="M620.5 13V15"/><path d="M624.5 13V15"/><path d="M627.5 0V15"/><path d="M631.5 13V15"/><path d="M634.5 13V15"/><path d="M637.5 13V15"/><path d="M641.5 13V15"/><path d="M644.5 11V15"/><path d="M648.5 13V15"/><path d="M651.5 13V15"/><path d="M655.5 13V15"/><path d="M658.5 13V15"/><path d="M662.5 0V15"/><path d="M665.5 13V15"/><path d="M669.5 13V15"/><path d="M672.5 13V15"/><path d="M675.5 13V15"/><path d="M679.5 11V15"/><path d="M682.5 13V15"/><path d="M686.5 13V15"/><path d="M689.5 13V15"/><path d="M693.5 13V15"/><path d="M696.5 0V15"/><path d="M700.5 13V15"/><path d="M703.5 13V15"/><path d="M707.5 13V15"/><path d="M710.5 13V15"/><path d="M713.5 11V15"/><path d="M717.5 13V15"/><path d="M720.5 13V15"/><path d="M724.5 13V15"/><path d="M727.5 13V15"/><path d="M731.5 0V15"/><path d="M734.5 13V15"/><path d="M738.5 13V15"/><path d="M741.5 13V15"/><path d="M745.5 13V15"/><path d="M748.5 11V15"/><path d="M751.5 13V15"/><path d="M755.5 13V15"/><path d="M758.5 13V15"/><path d="M762.5 13V15"/><path d="M765.5 0V15"/><path d="M769.5 13V15"/><path d="M772.5 13V15"/><path d="M776.5 13V15"/><path d="M779.5 13V15"/><path d="M783.5 11V15"/><path d="M786.5 13V15"/><path d="M789.5 13V15"/><path d="M793.5 13V15"/><path d="M796.5 13V15"/><path d="M800.5 0V15"/><path d="M803.5 13V15"/><path d="M807.5 13V15"/><path d="M810.5 13V15"/><path d="M814.5 13V15"/><path d="M817.5 11V15"/><path d="M821.5 13V15"/><path d="M824.5 13V15"/><path d="M827.5 13V15"/><path d="M831.5 13V15"/><path d="M834.5 0V15"/><path d="M838.5 13V15"/><path d="M841.5 13V15"/><path d="M845.5 13V15"/><path d="M848.5 13V15"/><path d="M852.5 11V15"/><path d="M855.5 13V15"/><path d="M859.5 13V15"/><path d="M862.5 13V15"/><path d="M865.5 13V15"/><path d="M869.5 0V15"/><path d="M872.5 13V15"/><path d="M876.5 13V15"/><path d="M879.5 13V15"/><path d="M883.5 13V15"/><path d="M886.5 11V15"/><path d="M890.5 13V15"/><path d="M893.5 13V15"/><path d="M897.5 13V15"/><path d="M900.5 13V15"/><path d="M904.5 0V15"/><path d="M907.5 13V15"/><path d="M910.5 13V15"/><path d="M914.5 13V15"/><path d="M917.5 13V15"/><path d="M921.5 11V15"/><path d="M924.5 13V15"/><path d="M928.5 13V15"/><path d="M931.5 13V15"/><path d="M935.5 13V15"/><path d="M938.5 0V15"/><path d="M942.5 13V15"/><path d="M945.5 13V15"/><path d="M948.5 13V15"/><path d="M952.5 13V15"/><path d="M955.5 11V15"/><path d="M959.5 13V15"/><path d="M962.5 13V15"/><path d="M966.5 13V15"/><path d="M969.5 13V15"/><path d="M973.5 0V15"/><path d="M976.5 13V15"/><path d="M980.5 13V15"/><path d="M983.5 13V15"/><path d="M986.5 13V15"/><path d="M990.5 11V15"/><path d="M993.5 13V15"/><path d="M997.5 13V15"/><path d="M1000.5 13V15"/><path d="M1004.5 13V15"/><path d="M1007.5 0V15"/><path d="M1011.5 13V15"/><path d="M1014.5 13V15"/><path d="M1018.5 13V15"/><path d="M1021.5 13V15"/><path d="M1024.5 11V15"/><path d="M1028.5 13V15"/><path d="M1031.5 13V15"/><path d="M1035.5 13V15"/></g></svg>
<div class="t" style="left:96px;top:144px;font-size:9.6px;letter-spacing:-0.3px;color:#ececec">0</div>
<div class="t" style="left:131px;top:144px;font-size:9.6px;letter-spacing:-0.3px;color:#ececec">10</div>
<div class="t" style="left:165px;top:144px;font-size:9.6px;letter-spacing:-0.3px;color:#ececec">20</div>
<div class="t" style="left:200px;top:144px;font-size:9.6px;letter-spacing:-0.3px;color:#ececec">30</div>
<div class="t" style="left:234px;top:144px;font-size:9.6px;letter-spacing:-0.3px;color:#ececec">40</div>
<div class="t" style="left:269px;top:144px;font-size:9.6px;letter-spacing:-0.3px;color:#ececec">50</div>
<div class="t" style="left:304px;top:144px;font-size:9.6px;letter-spacing:-0.3px;color:#ececec">60</div>
<div class="t" style="left:338px;top:144px;font-size:9.6px;letter-spacing:-0.3px;color:#ececec">70</div>
<div class="t" style="left:373px;top:144px;font-size:9.6px;letter-spacing:-0.3px;color:#ececec">80</div>
<div class="t" style="left:407px;top:144px;font-size:9.6px;letter-spacing:-0.3px;color:#ececec">90</div>
<div class="t" style="left:442px;top:144px;font-size:9.6px;letter-spacing:-0.3px;color:#ececec">100</div>
<div class="t" style="left:476px;top:144px;font-size:9.6px;letter-spacing:-0.3px;color:#ececec">110</div>
<div class="t" style="left:511px;top:144px;font-size:9.6px;letter-spacing:-0.3px;color:#ececec">120</div>
<div class="t" style="left:545px;top:144px;font-size:9.6px;letter-spacing:-0.3px;color:#ececec">130</div>
<div class="t" style="left:580px;top:144px;font-size:9.6px;letter-spacing:-0.3px;color:#ececec">140</div>
<div class="t" style="left:614px;top:144px;font-size:9.6px;letter-spacing:-0.3px;color:#ececec">150</div>
<div class="t" style="left:649px;top:144px;font-size:9.6px;letter-spacing:-0.3px;color:#ececec">160</div>
<div class="t" style="left:684px;top:144px;font-size:9.6px;letter-spacing:-0.3px;color:#ececec">170</div>
<div class="t" style="left:718px;top:144px;font-size:9.6px;letter-spacing:-0.3px;color:#ececec">180</div>
<div class="t" style="left:753px;top:144px;font-size:9.6px;letter-spacing:-0.3px;color:#ececec">190</div>
<div class="t" style="left:787px;top:144px;font-size:9.6px;letter-spacing:-0.3px;color:#ececec">200</div>
<div class="t" style="left:822px;top:144px;font-size:9.6px;letter-spacing:-0.3px;color:#ececec">210</div>
<div class="t" style="left:856px;top:144px;font-size:9.6px;letter-spacing:-0.3px;color:#ececec">220</div>
<div class="t" style="left:891px;top:144px;font-size:9.6px;letter-spacing:-0.3px;color:#ececec">230</div>
<div class="t" style="left:925px;top:144px;font-size:9.6px;letter-spacing:-0.3px;color:#ececec">240</div>
<div class="t" style="left:960px;top:144px;font-size:9.6px;letter-spacing:-0.3px;color:#ececec">250</div>
<div class="t" style="left:995px;top:144px;font-size:9.6px;letter-spacing:-0.3px;color:#ececec">260</div>
<div class="t" style="left:1029px;top:144px;font-size:9.6px;letter-spacing:-0.3px;color:#ececec">270</div>
<div class="t" style="left:1064px;top:144px;font-size:9.6px;letter-spacing:-0.3px;color:#ececec">280</div>
<div class="t" style="left:1098px;top:144px;font-size:9.6px;letter-spacing:-0.3px;color:#ececec">290</div>
<svg class="a" style="left:74px;top:158px" width="15" height="788"><g stroke="#bdbdbd" stroke-width="1"><path d="M13 2.5H15"/><path d="M13 6.5H15"/><path d="M13 9.5H15"/><path d="M11 13.5H15"/><path d="M13 16.5H15"/><path d="M13 19.5H15"/><path d="M13 23.5H15"/><path d="M13 26.5H15"/><path d="M0 30.5H15"/><path d="M13 33.5H15"/><path d="M13 37.5H15"/><path d="M13 40.5H15"/><path d="M13 44.5H15"/><path d="M11 47.5H15"/><path d="M13 51.5H15"/><path d="M13 54.5H15"/><path d="M13 57.5H15"/><path d="M13 61.5H15"/><path d="M0 64.5H15"/><path d="M13 68.5H15"/><path d="M13 71.5H15"/><path d="M13 75.5H15"/><path d="M13 78.5H15"/><path d="M11 82.5H15"/><path d="M13 85.5H15"/><path d="M13 89.5H15"/><path d="M13 92.5H15"/><path d="M13 95.5H15"/><path d="M0 99.5H15"/><path d="M13 102.5H15"/><path d="M13 106.5H15"/><path d="M13 109.5H15"/><path d="M13 113.5H15"/><path d="M11 116.5H15"/><path d="M13 120.5H15"/><path d="M13 123.5H15"/><path d="M13 127.5H15"/><path d="M13 130.5H15"/><path d="M0 133.5H15"/><path d="M13 137.5H15"/><path d="M13 140.5H15"/><path d="M13 144.5H15"/><path d="M13 147.5H15"/><path d="M11 151.5H15"/><path d="M13 154.5H15"/><path d="M13 158.5H15"/><path d="M13 161.5H15"/><path d="M13 165.5H15"/><path d="M0 168.5H15"/><path d="M13 171.5H15"/><path d="M13 175.5H15"/><path d="M13 178.5H15"/><path d="M13 182.5H15"/><path d="M11 185.5H15"/><path d="M13 189.5H15"/><path d="M13 192.5H15"/><path d="M13 196.5H15"/><path d="M13 199.5H15"/><path d="M0 203.5H15"/><path d="M13 206.5H15"/><path d="M13 209.5H15"/><path d="M13 213.5H15"/><path d="M13 216.5H15"/><path d="M11 220.5H15"/><path d="M13 223.5H15"/><path d="M13 227.5H15"/><path d="M13 230.5H15"/><path d="M13 234.5H15"/><path d="M0 237.5H15"/><path d="M13 241.5H15"/><path d="M13 244.5H15"/><path d="M13 247.5H15"/><path d="M13 251.5H15"/><path d="M11 254.5H15"/><path d="M13 258.5H15"/><path d="M13 261.5H15"/><path d="M13 265.5H15"/><path d="M13 268.5H15"/><path d="M0 272.5H15"/><path d="M13 275.5H15"/><path d="M13 279.5H15"/><path d="M13 282.5H15"/><path d="M13 285.5H15"/><path d="M11 289.5H15"/><path d="M13 292.5H15"/><path d="M13 296.5H15"/><path d="M13 299.5H15"/><path d="M13 303.5H15"/><path d="M0 306.5H15"/><path d="M13 310.5H15"/><path d="M13 313.5H15"/><path d="M13 317.5H15"/><path d="M13 320.5H15"/><path d="M11 323.5H15"/><path d="M13 327.5H15"/><path d="M13 330.5H15"/><path d="M13 334.5H15"/><path d="M13 337.5H15"/><path d="M0 341.5H15"/><path d="M13 344.5H15"/><path d="M13 348.5H15"/><path d="M13 351.5H15"/><path d="M13 355.5H15"/><path d="M11 358.5H15"/><path d="M13 361.5H15"/><path d="M13 365.5H15"/><path d="M13 368.5H15"/><path d="M13 372.5H15"/><path d="M0 375.5H15"/><path d="M13 379.5H15"/><path d="M13 382.5H15"/><path d="M13 386.5H15"/><path d="M13 389.5H15"/><path d="M11 393.5H15"/><path d="M13 396.5H15"/><path d="M13 399.5H15"/><path d="M13 403.5H15"/><path d="M13 406.5H15"/><path d="M0 410.5H15"/><path d="M13 413.5H15"/><path d="M13 417.5H15"/><path d="M13 420.5H15"/><path d="M13 424.5H15"/><path d="M11 427.5H15"/><path d="M13 431.5H15"/><path d="M13 434.5H15"/><path d="M13 437.5H15"/><path d="M13 441.5H15"/><path d="M0 444.5H15"/><path d="M13 448.5H15"/><path d="M13 451.5H15"/><path d="M13 455.5H15"/><path d="M13 458.5H15"/><path d="M11 462.5H15"/><path d="M13 465.5H15"/><path d="M13 469.5H15"/><path d="M13 472.5H15"/><path d="M13 475.5H15"/><path d="M0 479.5H15"/><path d="M13 482.5H15"/><path d="M13 486.5H15"/><path d="M13 489.5H15"/><path d="M13 493.5H15"/><path d="M11 496.5H15"/><path d="M13 500.5H15"/><path d="M13 503.5H15"/><path d="M13 507.5H15"/><path d="M13 510.5H15"/><path d="M0 514.5H15"/><path d="M13 517.5H15"/><path d="M13 520.5H15"/><path d="M13 524.5H15"/><path d="M13 527.5H15"/><path d="M11 531.5H15"/><path d="M13 534.5H15"/><path d="M13 538.5H15"/><path d="M13 541.5H15"/><path d="M13 545.5H15"/><path d="M0 548.5H15"/><path d="M13 552.5H15"/><path d="M13 555.5H15"/><path d="M13 558.5H15"/><path d="M13 562.5H15"/><path d="M11 565.5H15"/><path d="M13 569.5H15"/><path d="M13 572.5H15"/><path d="M13 576.5H15"/><path d="M13 579.5H15"/><path d="M0 583.5H15"/><path d="M13 586.5H15"/><path d="M13 590.5H15"/><path d="M13 593.5H15"/><path d="M13 596.5H15"/><path d="M11 600.5H15"/><path d="M13 603.5H15"/><path d="M13 607.5H15"/><path d="M13 610.5H15"/><path d="M13 614.5H15"/><path d="M0 617.5H15"/><path d="M13 621.5H15"/><path d="M13 624.5H15"/><path d="M13 628.5H15"/><path d="M13 631.5H15"/><path d="M11 634.5H15"/><path d="M13 638.5H15"/><path d="M13 641.5H15"/><path d="M13 645.5H15"/><path d="M13 648.5H15"/><path d="M0 652.5H15"/><path d="M13 655.5H15"/><path d="M13 659.5H15"/><path d="M13 662.5H15"/><path d="M13 666.5H15"/><path d="M11 669.5H15"/><path d="M13 672.5H15"/><path d="M13 676.5H15"/><path d="M13 679.5H15"/><path d="M13 683.5H15"/><path d="M0 686.5H15"/><path d="M13 690.5H15"/><path d="M13 693.5H15"/><path d="M13 697.5H15"/><path d="M13 700.5H15"/><path d="M11 704.5H15"/><path d="M13 707.5H15"/><path d="M13 710.5H15"/><path d="M13 714.5H15"/><path d="M13 717.5H15"/><path d="M0 721.5H15"/><path d="M13 724.5H15"/><path d="M13 728.5H15"/><path d="M13 731.5H15"/><path d="M13 735.5H15"/><path d="M11 738.5H15"/><path d="M13 742.5H15"/><path d="M13 745.5H15"/><path d="M13 748.5H15"/><path d="M13 752.5H15"/><path d="M0 755.5H15"/><path d="M13 759.5H15"/><path d="M13 762.5H15"/><path d="M13 766.5H15"/><path d="M13 769.5H15"/><path d="M11 773.5H15"/><path d="M13 776.5H15"/><path d="M13 780.5H15"/><path d="M13 783.5H15"/><path d="M13 786.5H15"/></g></svg>
<div class="a" style="left:74px;top:158px;width:15px;height:788px;overflow:hidden">
<div class="t" style="left:1px;top:-1px;font-size:9.4px;line-height:8.5px;color:#ececec;text-align:center;width:9px"><div style="height:8.5px">1</div><div style="height:8.5px">0</div></div>
<div class="t" style="left:1px;top:34px;font-size:9.4px;line-height:8.5px;color:#ececec;text-align:center;width:9px"><div style="height:8.5px">0</div></div>
<div class="t" style="left:1px;top:68px;font-size:9.4px;line-height:8.5px;color:#ececec;text-align:center;width:9px"><div style="height:8.5px">1</div><div style="height:8.5px">0</div></div>
<div class="t" style="left:1px;top:103px;font-size:9.4px;line-height:8.5px;color:#ececec;text-align:center;width:9px"><div style="height:8.5px">2</div><div style="height:8.5px">0</div></div>
<div class="t" style="left:1px;top:137px;font-size:9.4px;line-height:8.5px;color:#ececec;text-align:center;width:9px"><div style="height:8.5px">3</div><div style="height:8.5px">0</div></div>
<div class="t" style="left:1px;top:172px;font-size:9.4px;line-height:8.5px;color:#ececec;text-align:center;width:9px"><div style="height:8.5px">4</div><div style="height:8.5px">0</div></div>
<div class="t" style="left:1px;top:206px;font-size:9.4px;line-height:8.5px;color:#ececec;text-align:center;width:9px"><div style="height:8.5px">5</div><div style="height:8.5px">0</div></div>
<div class="t" style="left:1px;top:241px;font-size:9.4px;line-height:8.5px;color:#ececec;text-align:center;width:9px"><div style="height:8.5px">6</div><div style="height:8.5px">0</div></div>
<div class="t" style="left:1px;top:275px;font-size:9.4px;line-height:8.5px;color:#ececec;text-align:center;width:9px"><div style="height:8.5px">7</div><div style="height:8.5px">0</div></div>
<div class="t" style="left:1px;top:310px;font-size:9.4px;line-height:8.5px;color:#ececec;text-align:center;width:9px"><div style="height:8.5px">8</div><div style="height:8.5px">0</div></div>
<div class="t" style="left:1px;top:344px;font-size:9.4px;line-height:8.5px;color:#ececec;text-align:center;width:9px"><div style="height:8.5px">9</div><div style="height:8.5px">0</div></div>
<div class="t" style="left:1px;top:379px;font-size:9.4px;line-height:8.5px;color:#ececec;text-align:center;width:9px"><div style="height:8.5px">1</div><div style="height:8.5px">0</div><div style="height:8.5px">0</div></div>
<div class="t" style="left:1px;top:414px;font-size:9.4px;line-height:8.5px;color:#ececec;text-align:center;width:9px"><div style="height:8.5px">1</div><div style="height:8.5px">1</div><div style="height:8.5px">0</div></div>
<div class="t" style="left:1px;top:448px;font-size:9.4px;line-height:8.5px;color:#ececec;text-align:center;width:9px"><div style="height:8.5px">1</div><div style="height:8.5px">2</div><div style="height:8.5px">0</div></div>
<div class="t" style="left:1px;top:483px;font-size:9.4px;line-height:8.5px;color:#ececec;text-align:center;width:9px"><div style="height:8.5px">1</div><div style="height:8.5px">3</div><div style="height:8.5px">0</div></div>
<div class="t" style="left:1px;top:517px;font-size:9.4px;line-height:8.5px;color:#ececec;text-align:center;width:9px"><div style="height:8.5px">1</div><div style="height:8.5px">4</div><div style="height:8.5px">0</div></div>
<div class="t" style="left:1px;top:552px;font-size:9.4px;line-height:8.5px;color:#ececec;text-align:center;width:9px"><div style="height:8.5px">1</div><div style="height:8.5px">5</div><div style="height:8.5px">0</div></div>
<div class="t" style="left:1px;top:586px;font-size:9.4px;line-height:8.5px;color:#ececec;text-align:center;width:9px"><div style="height:8.5px">1</div><div style="height:8.5px">6</div><div style="height:8.5px">0</div></div>
<div class="t" style="left:1px;top:621px;font-size:9.4px;line-height:8.5px;color:#ececec;text-align:center;width:9px"><div style="height:8.5px">1</div><div style="height:8.5px">7</div><div style="height:8.5px">0</div></div>
<div class="t" style="left:1px;top:655px;font-size:9.4px;line-height:8.5px;color:#ececec;text-align:center;width:9px"><div style="height:8.5px">1</div><div style="height:8.5px">8</div><div style="height:8.5px">0</div></div>
<div class="t" style="left:1px;top:690px;font-size:9.4px;line-height:8.5px;color:#ececec;text-align:center;width:9px"><div style="height:8.5px">1</div><div style="height:8.5px">9</div><div style="height:8.5px">0</div></div>
<div class="t" style="left:1px;top:724px;font-size:9.4px;line-height:8.5px;color:#ececec;text-align:center;width:9px"><div style="height:8.5px">2</div><div style="height:8.5px">0</div><div style="height:8.5px">0</div></div>
<div class="t" style="left:1px;top:759px;font-size:9.4px;line-height:8.5px;color:#ececec;text-align:center;width:9px"><div style="height:8.5px">2</div><div style="height:8.5px">1</div><div style="height:8.5px">0</div></div>
<div class="t" style="left:1px;top:794px;font-size:9.4px;line-height:8.5px;color:#ececec;text-align:center;width:9px"><div style="height:8.5px">2</div><div style="height:8.5px">2</div><div style="height:8.5px">0</div></div>
</div>
<div class="a" style="left:75px;top:603px;width:13px;height:1px;background:repeating-linear-gradient(90deg,#ddd 0 1px,transparent 1px 2px)"></div>
<div class="a" style="left:587px;top:144px;width:1px;height:14px;background:repeating-linear-gradient(#ddd 0 1px,transparent 1px 2px)"></div>
<div class="a" style="left:89px;top:158px;width:1038px;height:788px;background:#5f5f5f"></div>
<div class="a" style="left:74px;top:158px;width:1053px;height:1px;background:#8c8c8c"></div>
<div class="a" style="left:89px;top:158px;width:1px;height:786px;background:#8c8c8c"></div>
<div class="a" style="left:1127px;top:143px;width:15px;height:803px;background:#4b4b4b"></div>
<div class="a" style="left:1129px;top:232px;width:12px;height:625px;background:#5c5c5c;border-radius:6px"></div>
<svg class="a" style="left:1131px;top:148px" width="9" height="5" viewBox="0 0 9 5"><path d="M0.5 4 L4.5 0.5 L8.5 4" fill="none" stroke="#8a8a8a" stroke-width="1.2"/></svg>
<svg class="a" style="left:1131px;top:937px" width="9" height="5" viewBox="0 0 9 5"><path d="M0.5 0.5 L4.5 4 L8.5 0.5" fill="none" stroke="#8a8a8a" stroke-width="1.2"/></svg>
<div class="a" style="left:1142px;top:113px;width:3px;height:849px;background:#3c3c3c"></div>
<div class="a" style="left:74px;top:946px;width:1068px;height:16px;background:#474747"></div>
<svg class="a" style="left:86px;top:948px" width="10" height="11" viewBox="0 0 10 11"><path d="M1 0V11" stroke="#777" stroke-width="2"/><path d="M9 0L3 5.5L9 11z" fill="#777"/></svg>
<svg class="a" style="left:106px;top:948px" width="7" height="11" viewBox="0 0 7 11"><path d="M7 0L1 5.5L7 11z" fill="#777"/></svg>
<div class="a" style="left:125px;top:946px;width:90px;height:16px;background:#3e3e3e;border:1px solid #5a5a5a;border-radius:2px"></div>
<div class="a" style="left:198px;top:946px;width:1px;height:16px;background:#5a5a5a"></div>
<div class="t" style="left:129px;top:949px;font-size:10px;color:#eee">1</div>
<svg class="a" style="left:202px;top:952px" width="9" height="5" viewBox="0 0 9 5"><path d="M0.5 0.5 L4.5 4 L8.5 0.5" fill="none" stroke="#cfcfcf" stroke-width="1.2"/></svg>
<svg class="a" style="left:229px;top:948px" width="7" height="11" viewBox="0 0 7 11"><path d="M0 0L6 5.5L0 11z" fill="#777"/></svg>
<svg class="a" style="left:247px;top:948px" width="10" height="11" viewBox="0 0 10 11"><path d="M9 0V11" stroke="#777" stroke-width="2"/><path d="M1 0L7 5.5L1 11z" fill="#777"/></svg>
<svg class="a" style="left:273px;top:947px" width="16" height="14" viewBox="0 0 16 14"><path d="M7 1a6 6 0 1 0 6 6H7z" fill="#c8c8c8"/><path d="M8.5 2.5V5.5H11.5" fill="none" stroke="#c8c8c8" stroke-width="1.3"/><path d="M13 12h3l-1.5 2z" fill="#c8c8c8"/></svg>
<div class="t" style="left:305px;top:949px;font-size:10.3px;color:#e0e0e0">[Основной] (рабо...</div>
<svg class="a" style="left:408px;top:952px" width="9" height="5" viewBox="0 0 9 5"><path d="M0.5 0.5 L4.5 4 L8.5 0.5" fill="none" stroke="#cfcfcf" stroke-width="1.2"/></svg>
<div class="a" style="left:431px;top:948px;width:11px;height:11px;border-radius:50%;background:#3fb63f"></div>
<div class="t" style="left:447px;top:949px;font-size:10.1px;color:#e0e0e0">Ошибок нет</div>
<svg class="a" style="left:519px;top:952px" width="9" height="5" viewBox="0 0 9 5"><path d="M0.5 0.5 L4.5 4 L8.5 0.5" fill="none" stroke="#cfcfcf" stroke-width="1.2"/></svg>
<div class="a" style="left:532px;top:946px;width:595px;height:16px;background:#424242"></div>
<svg class="a" style="left:540px;top:950px" width="5" height="9" viewBox="0 0 5 9"><path d="M4.5 0.5L0.5 4.5L4.5 8.5" fill="none" stroke="#777" stroke-width="1.1"/></svg>
<div class="a" style="left:817px;top:947px;width:137px;height:14px;background:#5a5a5a;border-radius:7px"></div>
<svg class="a" style="left:1094px;top:950px" width="5" height="9" viewBox="0 0 5 9"><path d="M0.5 0.5L4.5 4.5L0.5 8.5" fill="none" stroke="#777" stroke-width="1.1"/></svg>
<svg class="a" style="left:1109px;top:949px" width="17" height="12" viewBox="0 0 17 12"><rect x="0.75" y="0.75" width="15.5" height="10.5" fill="none" stroke="#c8c8c8" stroke-width="1.5"/><path d="M8.5 0V12" stroke="#c8c8c8" stroke-width="1.5"/></svg>
<div class="a" style="left:1145px;top:113px;width:135px;height:849px;background:#535353"></div>
<div class="a" style="left:1145px;top:113px;width:135px;height:13px;background:#404040"></div>
<svg class="a" style="left:1266px;top:117px" width="8" height="6" viewBox="0 0 8 6"><path d="M3.5 0.5L1 3L3.5 5.5M7.5 0.5L5 3L7.5 5.5" fill="none" stroke="#d0d0d0" stroke-width="1.2"/></svg>
<div class="a" style="left:1144px;top:126px;width:1px;height:836px;background:#474747"></div>
<div class="a" style="left:1145px;top:194px;width:135px;height:1px;background:#3a3a3a"></div>
<div class="a" style="left:1202px;top:130px;width:21px;height:4px;background:repeating-linear-gradient(90deg,#343434 0 1px,transparent 1px 2px)"></div>
<svg class="a" style="left:1156px;top:143px" width="21" height="17" viewBox="0 0 21 17"><path d="M0 1.5H17" stroke="#c8c8c8" stroke-width="1.2"/><path d="M0 6H17" stroke="#c8c8c8" stroke-width="2"/><path d="M0 11.2H17" stroke="#c8c8c8" stroke-width="2.8"/></svg>
<div class="t" style="left:1182px;top:145px;font-size:10.9px;font-weight:700;color:#ececec">Обводка</div>
<svg class="a" style="left:1154px;top:171px" width="21" height="17" viewBox="0 0 21 17"><path d="M9.5 0.5C4 0.5 0 3.5 0 7.2C0 10.5 3 12.5 7 12.5H13C16.5 12.5 19 10.5 19 7.3C19 3.2 15 0.5 9.5 0.5z" fill="#c8c8c8"/><circle cx="3.5" cy="8.2" r="1.3" fill="#555"/><circle cx="7" cy="10" r="1.3" fill="#555"/><circle cx="10.5" cy="10" r="1.3" fill="#555"/><circle cx="14" cy="9" r="1.3" fill="#555"/><circle cx="15" cy="5" r="1.5" fill="#555"/></svg>
<div class="t" style="left:1182px;top:173px;font-size:10.9px;font-weight:700;color:#ececec">Цвета</div>
<div class="a" style="left:1145px;top:263px;width:135px;height:1px;background:#3a3a3a"></div>
<div class="a" style="left:1202px;top:198px;width:21px;height:4px;background:repeating-linear-gradient(90deg,#343434 0 1px,transparent 1px 2px)"></div>
<svg class="a" style="left:1156px;top:211px" width="21" height="17" viewBox="0 0 21 17"><rect x="0" y="0" width="16" height="11" fill="#c8c8c8"/><rect x="1" y="1" width="4.3" height="4" fill="#8e8e8e"/><rect x="10.7" y="1" width="4.3" height="4" fill="#8e8e8e"/><rect x="5.8" y="6" width="4.3" height="4" fill="#8e8e8e"/><rect x="1" y="6" width="4.3" height="4" fill="#a8a8a8"/><rect x="10.7" y="6" width="4.3" height="4" fill="#b4b4b4"/><rect x="5.8" y="1" width="4.3" height="4" fill="#d4d4d4"/></svg>
<div class="t" style="left:1182px;top:213px;font-size:10.9px;font-weight:700;color:#ececec">Образцы</div>
<svg class="a" style="left:1154px;top:240px" width="21" height="17" viewBox="0 0 21 17"><path d="M5.5 15.2A5 5 0 0 1 4.3 5.5A7.5 7.5 0 0 1 17.2 4.2A5.6 5.6 0 0 1 16.8 15.2z" fill="none" stroke="#c8c8c8" stroke-width="1.5" transform="translate(0,-0.5) scale(1.0)"/><path d="M4.5 10.5C5.5 6.5 10 6.5 11 9.5C12 12.5 16 12.5 16.5 9.5C17 6.5 12.5 6 11 9.5C9.5 13 5 13 4.5 10.5z" fill="none" stroke="#c8c8c8" stroke-width="1.6"/></svg>
<div class="t" style="left:1182px;top:242px;font-size:10.9px;font-weight:700;color:#ececec">CC Libraries</div>
<div class="a" style="left:1145px;top:361px;width:135px;height:1px;background:#3a3a3a"></div>
<div class="a" style="left:1202px;top:267px;width:21px;height:4px;background:repeating-linear-gradient(90deg,#343434 0 1px,transparent 1px 2px)"></div>
<svg class="a" style="left:1156px;top:281px" width="21" height="17" viewBox="0 0 21 17"><path d="M0.5 7.5H6.5V13.5H0.5z M3.5 4.5H9.5V10.5H3.5z" fill="none" stroke="#c8c8c8"/><path d="M9 11L13 0H14L18 11H16L15 8H12L11 11z M12.5 6.5H14.5L13.5 3z" fill="#c8c8c8"/></svg>
<div class="t" style="left:1182px;top:283px;font-size:10.9px;font-weight:700;color:#ececec">Стили симво...</div>
<svg class="a" style="left:1156px;top:309px" width="21" height="17" viewBox="0 0 21 17"><path d="M0.5 7.5H6.5V13.5H0.5z M3.5 4.5H9.5V10.5H3.5z" fill="none" stroke="#c8c8c8"/><path d="M11 1H17V3H16V13H15V3H14V13H13V7A3 3 0 0 1 11 1z" fill="#c8c8c8"/></svg>
<div class="t" style="left:1182px;top:311px;font-size:10.9px;font-weight:700;color:#ececec">Стили абзацев</div>
<svg class="a" style="left:1156px;top:337px" width="21" height="17" viewBox="0 0 21 17"><path d="M0.5 7.5H6.5V13.5H0.5z M3.5 4.5H9.5V10.5H3.5z" fill="none" stroke="#c8c8c8"/><path d="M6 3V0.5H16.5V11H11" fill="none" stroke="#c8c8c8" stroke-dasharray="1.5 1"/></svg>
<div class="t" style="left:1182px;top:339px;font-size:10.9px;font-weight:700;color:#ececec">Стили объект...</div>
<div class="a" style="left:1145px;top:457px;width:135px;height:1px;background:#3a3a3a"></div>
<div class="a" style="left:1202px;top:365px;width:21px;height:4px;background:repeating-linear-gradient(90deg,#343434 0 1px,transparent 1px 2px)"></div>
<svg class="a" style="left:1156px;top:378px" width="21" height="17" viewBox="0 0 21 17"><path d="M1 2L8 1V14L1 13z M16 2L9 1V14L16 13z" fill="#c8c8c8"/><path d="M8.5 0V15" stroke="#535353"/></svg>
<div class="t" style="left:1182px;top:380px;font-size:10.9px;font-weight:700;color:#ececec">Страницы</div>
<svg class="a" style="left:1156px;top:406px" width="21" height="17" viewBox="0 0 21 17"><path d="M8.5 0L17 4.5L8.5 9L0 4.5z" fill="#c8c8c8"/><path d="M2 7.5L0 8.5L8.5 13L17 8.5L15 7.5L8.5 11z" fill="#c8c8c8"/></svg>
<div class="t" style="left:1182px;top:408px;font-size:10.9px;font-weight:700;color:#ececec">Слои</div>
<svg class="a" style="left:1156px;top:434px" width="21" height="17" viewBox="0 0 21 17"><rect x="0.8" y="2.8" width="9" height="6.5" rx="3.2" fill="none" stroke="#c8c8c8" stroke-width="1.6"/><rect x="7.2" y="2.8" width="9" height="6.5" rx="3.2" fill="none" stroke="#c8c8c8" stroke-width="1.6"/></svg>
<div class="t" style="left:1182px;top:436px;font-size:10.9px;font-weight:700;color:#ececec">Связи</div>
<div class="a" style="left:1145px;top:497px;width:135px;height:1px;background:#3a3a3a"></div>
<div class="a" style="left:1202px;top:461px;width:21px;height:4px;background:repeating-linear-gradient(90deg,#343434 0 1px,transparent 1px 2px)"></div>
<svg class="a" style="left:1156px;top:475px" width="21" height="17" viewBox="0 0 21 17"><path d="M0 1H17M0 13H17M0 4H3M0 7H3M0 10H3M14 4H17M14 7H17M14 10H17" stroke="#c8c8c8" stroke-width="1.3"/><circle cx="8.5" cy="7" r="4" fill="#c8c8c8"/></svg>
<div class="t" style="left:1182px;top:477px;font-size:10.9px;font-weight:700;color:#ececec">Обтекание те...</div>
<div class="a" style="left:1145px;top:595px;width:135px;height:1px;background:#3a3a3a"></div>
<div class="a" style="left:1202px;top:501px;width:21px;height:4px;background:repeating-linear-gradient(90deg,#343434 0 1px,transparent 1px 2px)"></div>
<svg class="a" style="left:1156px;top:516px" width="21" height="17" viewBox="0 0 21 17"><path d="M0 13L5 0H7L12 13H9.5L8.5 10H3.5L2.5 13z M4.3 7.8H7.7L6 3z" fill="#c8c8c8"/><path d="M15.5 0V14" stroke="#c8c8c8" stroke-width="1.2"/></svg>
<div class="t" style="left:1182px;top:518px;font-size:10.9px;font-weight:700;color:#ececec">Символ</div>
<svg class="a" style="left:1156px;top:544px" width="21" height="17" viewBox="0 0 21 17"><path d="M5 0H12V1.5H10.5V13H9V1.5H8V13H6.5V7.5A3.8 3.8 0 0 1 5 0z" fill="#c8c8c8"/></svg>
<div class="t" style="left:1182px;top:546px;font-size:10.9px;font-weight:700;color:#ececec">Абзац</div>
<svg class="a" style="left:1156px;top:572px" width="21" height="17" viewBox="0 0 21 17"><path d="M1 13C5 11 7 5 9 1C10 5 11 9 13 13M4 9H12" fill="none" stroke="#c8c8c8" stroke-width="1.4"/><path d="M9 1C7 1 5 2 4 4" fill="none" stroke="#c8c8c8" stroke-width="1.2"/></svg>
<div class="t" style="left:1182px;top:574px;font-size:10.9px;font-weight:700;color:#ececec">Глифы</div>
<div class="a" style="left:1145px;top:692px;width:135px;height:1px;background:#3a3a3a"></div>
<div class="a" style="left:1202px;top:599px;width:21px;height:4px;background:repeating-linear-gradient(90deg,#343434 0 1px,transparent 1px 2px)"></div>
<svg class="a" style="left:1156px;top:613px" width="21" height="17" viewBox="0 0 21 17"><rect x="0.75" y="0.75" width="15.5" height="12.5" fill="none" stroke="#c8c8c8" stroke-width="1.5"/><path d="M0 4.5H17M0 8.5H17M5.5 4.5V13" stroke="#c8c8c8" stroke-width="1.2"/></svg>
<div class="t" style="left:1182px;top:615px;font-size:10.9px;font-weight:700;color:#ececec">Таблица</div>
<svg class="a" style="left:1156px;top:641px" width="21" height="17" viewBox="0 0 21 17"><rect x="4.5" y="0.5" width="12" height="10" fill="none" stroke="#c8c8c8" stroke-width="1.2"/><path d="M4.5 3.5H16.5M4.5 6.5H16.5M8.5 3.5V10.5" stroke="#c8c8c8"/><path d="M0.5 7.5H6.5V13.5H0.5z M3.5 9.5H9.5V15.5H3.5z" fill="#535353" stroke="#c8c8c8"/></svg>
<div class="t" style="left:1182px;top:643px;font-size:10.9px;font-weight:700;color:#ececec">Стили таблиц</div>
<svg class="a" style="left:1156px;top:669px" width="21" height="17" viewBox="0 0 21 17"><rect x="4.5" y="0.5" width="12" height="10" fill="none" stroke="#c8c8c8" stroke-width="1.2"/><path d="M4.5 3.5H16.5M10.5 3.5V10.5" stroke="#c8c8c8"/><path d="M0.5 7.5H6.5V13.5H0.5z M3.5 9.5H9.5V15.5H3.5z" fill="#535353" stroke="#c8c8c8"/></svg>
<div class="t" style="left:1182px;top:671px;font-size:10.9px;font-weight:700;color:#ececec">Стили ячеек</div>
<div class="a" style="left:1145px;top:761px;width:135px;height:1px;background:#3a3a3a"></div>
<div class="a" style="left:1202px;top:696px;width:21px;height:4px;background:repeating-linear-gradient(90deg,#343434 0 1px,transparent 1px 2px)"></div>
<svg class="a" style="left:1156px;top:710px" width="21" height="17" viewBox="0 0 21 17"><path d="M1 0V15" stroke="#c8c8c8" stroke-width="1.5"/><rect x="3" y="2" width="8" height="4.5" fill="#c8c8c8"/><rect x="3" y="8.5" width="13" height="4.5" fill="#c8c8c8"/></svg>
<div class="t" style="left:1182px;top:712px;font-size:10.9px;font-weight:700;color:#ececec">Выравнивание</div>
<svg class="a" style="left:1156px;top:738px" width="21" height="17" viewBox="0 0 21 17"><rect x="0" y="0" width="9" height="9" fill="#c8c8c8"/><rect x="6" y="6" width="10" height="9" fill="#c8c8c8" stroke="#535353" stroke-width="1"/></svg>
<div class="t" style="left:1182px;top:740px;font-size:10.9px;font-weight:700;color:#ececec">Обработка ко...</div>
<div class="a" style="left:1145px;top:802px;width:135px;height:1px;background:#3a3a3a"></div>
<div class="a" style="left:1202px;top:765px;width:21px;height:4px;background:repeating-linear-gradient(90deg,#343434 0 1px,transparent 1px 2px)"></div>
<svg class="a" style="left:1156px;top:779px" width="21" height="17" viewBox="0 0 21 17"><defs><linearGradient id="rg1" x1="0" x2="1"><stop offset="0" stop-color="#5a5a5a"/><stop offset="1" stop-color="#e0e0e0"/></linearGradient></defs><rect x="0.5" y="0.5" width="16" height="12" fill="url(#rg1)" stroke="#c8c8c8"/></svg>
<div class="t" style="left:1182px;top:781px;font-size:10.9px;font-weight:700;color:#ececec">Градиент</div>
<div class="a" style="left:1275px;top:126px;width:1px;height:676px;background:#4a4a4a"></div>
<div class="a" style="left:94px;top:188px;width:1029px;height:729px;background:#4a4a4a"></div>
<div class="a" style="left:95px;top:189px;width:1028px;height:728px;background:#000"></div>
<div class="a" style="left:95px;top:189px;width:1026px;height:726px;background:#fff"></div>
<svg class="a" style="left:0;top:0" width="1280" height="962" viewBox="0 0 1280 962"><defs><linearGradient id="sg1orange" gradientUnits="userSpaceOnUse" x1="477.5" x2="520.0" y1="0" y2="0"><stop offset="0" stop-color="#6e4522"/><stop offset="1" stop-color="#50321a"/></linearGradient><linearGradient id="sg1blue" gradientUnits="userSpaceOnUse" x1="428.5" x2="477.5" y1="0" y2="0"><stop offset="0" stop-color="#1f3656"/><stop offset="1" stop-color="#192d49"/></linearGradient><linearGradient id="sg1red" gradientUnits="userSpaceOnUse" x1="308.9" x2="428.5" y1="0" y2="0"><stop offset="0" stop-color="#7c2d2c"/><stop offset="1" stop-color="#4d1c1c"/></linearGradient><linearGradient id="sg1green" gradientUnits="userSpaceOnUse" x1="211.7" x2="308.9" y1="0" y2="0"><stop offset="0" stop-color="#6e8c3e"/><stop offset="0.3" stop-color="#779544"/><stop offset="1" stop-color="#5e7a35"/></linearGradient></defs><path d="M520.0 363.3 A154.15 72.3 0 0 1 477.5 413.2 L474.5 449.3 A150 70 0 0 0 515.9 401.0Z" fill="url(#sg1orange)" stroke="url(#sg1orange)" stroke-width="0.6"/><path d="M477.5 413.2 A154.15 72.3 0 0 1 428.5 429.3 L426.9 464.9 A150 70 0 0 0 474.5 449.3Z" fill="url(#sg1blue)" stroke="url(#sg1blue)" stroke-width="0.6"/><path d="M428.5 429.3 A154.15 72.3 0 0 1 308.9 430.5 L310.4 466.0 A150 70 0 0 0 426.9 464.9Z" fill="url(#sg1red)" stroke="url(#sg1red)" stroke-width="0.6"/><path d="M308.9 430.5 A154.15 72.3 0 0 1 211.7 363.3 L215.9 401.0 A150 70 0 0 0 310.4 466.0Z" fill="url(#sg1green)" stroke="url(#sg1green)" stroke-width="0.6"/><path d="M366.8 350.9 L373.4 291.1 A154.15 72.3 0 0 1 477.5 413.2Z" fill="#d8813b" stroke="#d8813b" stroke-width="0.6"/><path d="M366.8 350.9 L477.5 413.2 A154.15 72.3 0 0 1 428.5 429.3Z" fill="#4670a8" stroke="#4670a8" stroke-width="0.6"/><path d="M366.8 350.9 L428.5 429.3 A154.15 72.3 0 0 1 308.9 430.5Z" fill="#a84340" stroke="#a84340" stroke-width="0.6"/><path d="M366.8 350.9 L308.9 430.5 A154.15 72.3 0 0 1 218.2 342.5Z" fill="#89a34d" stroke="#89a34d" stroke-width="0.6"/><path d="M366.8 350.9 L218.2 342.5 A154.15 72.3 0 0 1 253.5 313.8Z" fill="#745090" stroke="#745090" stroke-width="0.6"/><path d="M366.8 350.9 L253.5 313.8 A154.15 72.3 0 0 1 373.4 291.1Z" fill="#3f93ab" stroke="#3f93ab" stroke-width="0.6"/><defs><linearGradient id="sg2orange" gradientUnits="userSpaceOnUse" x1="975.1" x2="1027.0" y1="0" y2="0"><stop offset="0" stop-color="#6e4522"/><stop offset="1" stop-color="#50321a"/></linearGradient><linearGradient id="sg2blue" gradientUnits="userSpaceOnUse" x1="915.5" x2="975.1" y1="0" y2="0"><stop offset="0" stop-color="#1f3656"/><stop offset="1" stop-color="#192d49"/></linearGradient><linearGradient id="sg2red" gradientUnits="userSpaceOnUse" x1="769.5" x2="915.5" y1="0" y2="0"><stop offset="0" stop-color="#7c2d2c"/><stop offset="1" stop-color="#4d1c1c"/></linearGradient><linearGradient id="sg2green" gradientUnits="userSpaceOnUse" x1="651.0" x2="769.5" y1="0" y2="0"><stop offset="0" stop-color="#6e8c3e"/><stop offset="0.3" stop-color="#779544"/><stop offset="1" stop-color="#5e7a35"/></linearGradient></defs><path d="M1027.0 370.0 A188 84 0 0 1 975.1 427.9 L971.2 468.0 A182.6 81.3 0 0 0 1021.6 411.9Z" fill="url(#sg2orange)" stroke="url(#sg2orange)" stroke-width="0.6"/><path d="M975.1 427.9 A188 84 0 0 1 915.5 446.7 L913.3 486.2 A182.6 81.3 0 0 0 971.2 468.0Z" fill="url(#sg2blue)" stroke="url(#sg2blue)" stroke-width="0.6"/><path d="M915.5 446.7 A188 84 0 0 1 769.5 448.0 L771.5 487.4 A182.6 81.3 0 0 0 913.3 486.2Z" fill="url(#sg2red)" stroke="url(#sg2red)" stroke-width="0.6"/><path d="M769.5 448.0 A188 84 0 0 1 651.0 370.0 L656.4 411.9 A182.6 81.3 0 0 0 771.5 487.4Z" fill="url(#sg2green)" stroke="url(#sg2green)" stroke-width="0.6"/><path d="M840.1 355.6 L848.2 286.1 A188 84 0 0 1 975.1 427.9Z" fill="#d8813b" stroke="#d8813b" stroke-width="0.6"/><path d="M840.1 355.6 L975.1 427.9 A188 84 0 0 1 915.5 446.7Z" fill="#4670a8" stroke="#4670a8" stroke-width="0.6"/><path d="M840.1 355.6 L915.5 446.7 A188 84 0 0 1 769.5 448.0Z" fill="#a84340" stroke="#a84340" stroke-width="0.6"/><path d="M840.1 355.6 L769.5 448.0 A188 84 0 0 1 658.9 345.9Z" fill="#89a34d" stroke="#89a34d" stroke-width="0.6"/><path d="M840.1 355.6 L658.9 345.9 A188 84 0 0 1 702.0 312.5Z" fill="#745090" stroke="#745090" stroke-width="0.6"/><path d="M840.1 355.6 L702.0 312.5 A188 84 0 0 1 848.2 286.1Z" fill="#3f93ab" stroke="#3f93ab" stroke-width="0.6"/><defs><linearGradient id="sg3orange" gradientUnits="userSpaceOnUse" x1="483.4" x2="528.0" y1="0" y2="0"><stop offset="0" stop-color="#6e4522"/><stop offset="1" stop-color="#50321a"/></linearGradient><linearGradient id="sg3blue" gradientUnits="userSpaceOnUse" x1="432.0" x2="483.4" y1="0" y2="0"><stop offset="0" stop-color="#1f3656"/><stop offset="1" stop-color="#192d49"/></linearGradient><linearGradient id="sg3red" gradientUnits="userSpaceOnUse" x1="306.4" x2="432.0" y1="0" y2="0"><stop offset="0" stop-color="#7c2d2c"/><stop offset="1" stop-color="#4d1c1c"/></linearGradient><linearGradient id="sg3green" gradientUnits="userSpaceOnUse" x1="204.4" x2="306.4" y1="0" y2="0"><stop offset="0" stop-color="#6e8c3e"/><stop offset="0.3" stop-color="#779544"/><stop offset="1" stop-color="#5e7a35"/></linearGradient></defs><path d="M528.0 713.5 A161.8 76.5 0 0 1 483.4 766.3 L480.2 804.0 A157.4 74.1 0 0 0 523.6 752.9Z" fill="url(#sg3orange)" stroke="url(#sg3orange)" stroke-width="0.6"/><path d="M483.4 766.3 A161.8 76.5 0 0 1 432.0 783.4 L430.2 820.6 A157.4 74.1 0 0 0 480.2 804.0Z" fill="url(#sg3blue)" stroke="url(#sg3blue)" stroke-width="0.6"/><path d="M432.0 783.4 A161.8 76.5 0 0 1 306.4 784.6 L308.0 821.7 A157.4 74.1 0 0 0 430.2 820.6Z" fill="url(#sg3red)" stroke="url(#sg3red)" stroke-width="0.6"/><path d="M306.4 784.6 A161.8 76.5 0 0 1 204.4 713.5 L208.8 752.9 A157.4 74.1 0 0 0 308.0 821.7Z" fill="url(#sg3green)" stroke="url(#sg3green)" stroke-width="0.6"/><path d="M367.2 700.3 L374.1 637.1 A161.8 76.5 0 0 1 483.4 766.3Z" fill="#d8813b" stroke="#d8813b" stroke-width="0.6"/><path d="M367.2 700.3 L483.4 766.3 A161.8 76.5 0 0 1 432.0 783.4Z" fill="#4670a8" stroke="#4670a8" stroke-width="0.6"/><path d="M367.2 700.3 L432.0 783.4 A161.8 76.5 0 0 1 306.4 784.6Z" fill="#a84340" stroke="#a84340" stroke-width="0.6"/><path d="M367.2 700.3 L306.4 784.6 A161.8 76.5 0 0 1 211.2 691.5Z" fill="#89a34d" stroke="#89a34d" stroke-width="0.6"/><path d="M367.2 700.3 L211.2 691.5 A161.8 76.5 0 0 1 248.3 661.1Z" fill="#745090" stroke="#745090" stroke-width="0.6"/><path d="M367.2 700.3 L248.3 661.1 A161.8 76.5 0 0 1 374.1 637.1Z" fill="#3f93ab" stroke="#3f93ab" stroke-width="0.6"/><defs><linearGradient id="sg4orange" gradientUnits="userSpaceOnUse" x1="975.1" x2="1027.0" y1="0" y2="0"><stop offset="0" stop-color="#6e4522"/><stop offset="1" stop-color="#50321a"/></linearGradient><linearGradient id="sg4blue" gradientUnits="userSpaceOnUse" x1="915.5" x2="975.1" y1="0" y2="0"><stop offset="0" stop-color="#1f3656"/><stop offset="1" stop-color="#192d49"/></linearGradient><linearGradient id="sg4red" gradientUnits="userSpaceOnUse" x1="769.5" x2="915.5" y1="0" y2="0"><stop offset="0" stop-color="#7c2d2c"/><stop offset="1" stop-color="#4d1c1c"/></linearGradient><linearGradient id="sg4green" gradientUnits="userSpaceOnUse" x1="651.0" x2="769.5" y1="0" y2="0"><stop offset="0" stop-color="#6e8c3e"/><stop offset="0.3" stop-color="#779544"/><stop offset="1" stop-color="#5e7a35"/></linearGradient></defs><path d="M1027.0 715.0 A188 84 0 0 1 975.1 772.9 L971.2 813.0 A182.6 81.3 0 0 0 1021.6 756.9Z" fill="url(#sg4orange)" stroke="url(#sg4orange)" stroke-width="0.6"/><path d="M975.1 772.9 A188 84 0 0 1 915.5 791.7 L913.3 831.2 A182.6 81.3 0 0 0 971.2 813.0Z" fill="url(#sg4blue)" stroke="url(#sg4blue)" stroke-width="0.6"/><path d="M915.5 791.7 A188 84 0 0 1 769.5 793.0 L771.5 832.4 A182.6 81.3 0 0 0 913.3 831.2Z" fill="url(#sg4red)" stroke="url(#sg4red)" stroke-width="0.6"/><path d="M769.5 793.0 A188 84 0 0 1 651.0 715.0 L656.4 756.9 A182.6 81.3 0 0 0 771.5 832.4Z" fill="url(#sg4green)" stroke="url(#sg4green)" stroke-width="0.6"/><path d="M840.1 700.6 L848.2 631.1 A188 84 0 0 1 975.1 772.9Z" fill="#d8813b" stroke="#d8813b" stroke-width="0.6"/><path d="M840.1 700.6 L975.1 772.9 A188 84 0 0 1 915.5 791.7Z" fill="#4670a8" stroke="#4670a8" stroke-width="0.6"/><path d="M840.1 700.6 L915.5 791.7 A188 84 0 0 1 769.5 793.0Z" fill="#a84340" stroke="#a84340" stroke-width="0.6"/><path d="M840.1 700.6 L769.5 793.0 A188 84 0 0 1 658.9 690.9Z" fill="#89a34d" stroke="#89a34d" stroke-width="0.6"/><path d="M840.1 700.6 L658.9 690.9 A188 84 0 0 1 702.0 657.5Z" fill="#745090" stroke="#745090" stroke-width="0.6"/><path d="M840.1 700.6 L702.0 657.5 A188 84 0 0 1 848.2 631.1Z" fill="#3f93ab" stroke="#3f93ab" stroke-width="0.6"/></svg>
<div class="a" style="left:243px;top:265px;width:65px;height:30px;background:#fff;border-top:1px solid #2a2a2a;border-left:1px solid #2a2a2a;border-right:1px solid #2a2a2a;border-bottom:1px solid #2a2a2a"></div><div class="t" style="left:243px;top:266px;width:65px;text-align:center;font-size:10.4px;font-weight:700;color:#0a0a0a;line-height:14.5px;letter-spacing:-0.2px">Категория 5.<br>30%</div>
<div class="a" style="left:159px;top:304px;width:65px;height:29px;background:#fff;border-top:1px solid #2a2a2a;border-left:1px solid #2a2a2a;border-right:1px solid #2a2a2a;border-bottom:1px solid #2a2a2a"></div><div class="t" style="left:159px;top:305px;width:65px;text-align:center;font-size:10.4px;font-weight:700;color:#0a0a0a;line-height:14.5px;letter-spacing:-0.2px">Категория 4.<br>15%</div>
<div class="a" style="left:156px;top:419px;width:65px;height:29px;background:#fff;border-top:1px solid #2a2a2a;border-left:1px solid #2a2a2a;border-right:1px solid #2a2a2a;border-bottom:1px solid #2a2a2a"></div><div class="t" style="left:156px;top:420px;width:65px;text-align:center;font-size:10.4px;font-weight:700;color:#0a0a0a;line-height:14.5px;letter-spacing:-0.2px">Категория 3.<br>40%</div>
<div class="a" style="left:337px;top:479px;width:65px;height:30px;background:#fff;border-left:1px solid #2a2a2a;border-right:1px solid #2a2a2a"></div><div class="t" style="left:337px;top:480px;width:65px;text-align:center;font-size:10.4px;font-weight:700;color:#0a0a0a;line-height:14.5px;letter-spacing:-0.2px">Категория 2.<br>20%</div>
<div class="a" style="left:464px;top:461px;width:66px;height:30px;background:#fff;border-left:1px solid #2a2a2a;border-bottom:1px solid #2a2a2a"></div><div class="t" style="left:464px;top:462px;width:66px;text-align:center;font-size:10.4px;font-weight:700;color:#0a0a0a;line-height:14.5px;letter-spacing:-0.2px">Категория 1.<br>10%</div>
<div class="a" style="left:494px;top:292px;width:70px;height:29px;background:#fff;border-top:1px solid #2a2a2a;border-left:1px solid #2a2a2a;border-right:1px solid #2a2a2a;border-bottom:1px solid #2a2a2a"></div><div class="t" style="left:494px;top:293px;width:70px;text-align:center;font-size:10.4px;font-weight:700;color:#0a0a0a;line-height:14.5px;letter-spacing:-0.2px">Категория 6.<br>70%</div>
<div class="a" style="left:151px;top:522px;width:400px;height:1px;background:#c4c4c4"></div>
<div class="a" style="left:983px;top:284px;width:69px;height:31px;background:#fff;border-top:1px solid #2a2a2a;border-left:1px solid #2a2a2a;border-right:1px solid #2a2a2a;border-bottom:1px solid #2a2a2a"></div><div class="t" style="left:983px;top:285px;width:69px;text-align:center;font-size:10.4px;font-weight:700;color:#0a0a0a;line-height:14.5px;letter-spacing:-0.2px">Категория 6.<br>70%</div>
<div class="a" style="left:955px;top:482px;width:69px;height:29px;background:#fff;border-top:1px solid #2a2a2a;border-left:1px solid #2a2a2a;border-right:1px solid #2a2a2a;border-bottom:1px solid #2a2a2a"></div><div class="t" style="left:955px;top:483px;width:69px;text-align:center;font-size:10.4px;font-weight:700;color:#0a0a0a;line-height:14.5px;letter-spacing:-0.2px">Категория 1.<br>10%</div>
<div class="a" style="left:719px;top:259px;width:1px;height:12px;background:#2a2a2a"></div>
<div class="t" style="left:721px;top:262px;font-size:10.4px;font-weight:700;color:#0a0a0a;letter-spacing:-0.2px">Категория 5</div>
<div class="a" style="left:830px;top:498px;width:60px;height:31px;background:#fff;border-right:1px solid #2a2a2a;border-bottom:1px solid #2a2a2a"></div><div class="t" style="left:830px;top:499px;width:60px;text-align:center;font-size:10.4px;font-weight:700;color:#0a0a0a;line-height:14.5px;letter-spacing:-0.2px"><br></div>
<div class="a" style="left:237px;top:610px;width:67px;height:30px;background:#fff;border-top:1px solid #2a2a2a"></div><div class="t" style="left:237px;top:611px;width:67px;text-align:center;font-size:10.4px;font-weight:700;color:#0a0a0a;line-height:14.5px;letter-spacing:-0.2px">Категория 5.<br>30%</div>
<div class="a" style="left:148px;top:650px;width:69px;height:32px;background:#fff;border-top:1px solid #2a2a2a;border-left:1px solid #2a2a2a;border-right:1px solid #2a2a2a;border-bottom:1px solid #2a2a2a"></div><div class="t" style="left:148px;top:651px;width:69px;text-align:center;font-size:10.4px;font-weight:700;color:#0a0a0a;line-height:14.5px;letter-spacing:-0.2px">Категория 4.<br>15%</div>
<div class="a" style="left:145px;top:771px;width:68px;height:30px;background:#fff;border-top:1px solid #2a2a2a;border-left:1px solid #2a2a2a;border-right:1px solid #2a2a2a"></div><div class="t" style="left:145px;top:772px;width:68px;text-align:center;font-size:10.4px;font-weight:700;color:#0a0a0a;line-height:14.5px;letter-spacing:-0.2px">Категория 3.<br>40%</div>
<div class="a" style="left:336px;top:836px;width:68px;height:30px;background:#fff;border-top:1px solid #2a2a2a;border-left:1px solid #2a2a2a;border-right:1px solid #2a2a2a"></div><div class="t" style="left:336px;top:837px;width:68px;text-align:center;font-size:10.4px;font-weight:700;color:#0a0a0a;line-height:14.5px;letter-spacing:-0.2px">Категория 2.<br>20%</div>
<div class="a" style="left:470px;top:817px;width:70px;height:30px;background:#fff;border-top:1px solid #2a2a2a;border-left:1px solid #2a2a2a;border-right:1px solid #2a2a2a;border-bottom:1px solid #2a2a2a"></div><div class="t" style="left:470px;top:818px;width:70px;text-align:center;font-size:10.4px;font-weight:700;color:#0a0a0a;line-height:14.5px;letter-spacing:-0.2px">Категория 1.<br>10%</div>
<div class="a" style="left:500px;top:640px;width:60px;height:30px;background:#fff;border-top:1px solid #2a2a2a;border-left:1px solid #2a2a2a;border-right:1px solid #2a2a2a;border-bottom:1px solid #2a2a2a"></div><div class="t" style="left:500px;top:641px;width:60px;text-align:center;font-size:10.4px;font-weight:700;color:#0a0a0a;line-height:14.5px;letter-spacing:-0.2px">Категория 6.<br>70%</div>
<div class="a" style="left:982px;top:628px;width:70px;height:30px;background:#fff;border-top:1px solid #2a2a2a;border-left:1px solid #2a2a2a;border-right:1px solid #2a2a2a;border-bottom:1px solid #2a2a2a"></div><div class="t" style="left:982px;top:629px;width:70px;text-align:center;font-size:10.4px;font-weight:700;color:#0a0a0a;line-height:14.5px;letter-spacing:-0.2px">Категория 6.<br>70%</div>
<div class="a" style="left:954px;top:824px;width:70px;height:31px;background:#fff;border-top:1px solid #2a2a2a;border-left:1px solid #2a2a2a;border-right:1px solid #2a2a2a;border-bottom:1px solid #2a2a2a"></div><div class="t" style="left:954px;top:825px;width:70px;text-align:center;font-size:10.4px;font-weight:700;color:#0a0a0a;line-height:14.5px;letter-spacing:-0.2px">Категория 1.<br>10%</div>
<div class="a" style="left:820px;top:841px;width:70px;height:32px;background:#fff;border-left:1px solid #2a2a2a;border-right:1px solid #2a2a2a"></div><div class="t" style="left:820px;top:842px;width:70px;text-align:center;font-size:10.4px;font-weight:700;color:#0a0a0a;line-height:14.5px;letter-spacing:-0.2px"><br>20%</div>
<div class="a" style="left:128px;top:223px;width:959px;height:1px;background:#d676e0"></div>
<div class="a" style="left:128px;top:880px;width:959px;height:1px;background:#d676e0"></div>
<div class="a" style="left:128px;top:223px;width:1px;height:658px;background:#9061e8"></div>
<div class="a" style="left:1086px;top:223px;width:1px;height:658px;background:#9061e8"></div>
<div class="a" style="left:603px;top:223px;width:1px;height:658px;background:#9061e8"></div>
<div class="a" style="left:611px;top:223px;width:1px;height:658px;background:#9061e8"></div>
<div class="a" style="left:128px;top:247px;width:476px;height:1px;background:#5a8ad6"></div>
<div class="a" style="left:128px;top:536px;width:476px;height:1px;background:#5a8ad6"></div>
<div class="a" style="left:128px;top:567px;width:476px;height:1px;background:#5a8ad6"></div>
<div class="a" style="left:611px;top:247px;width:476px;height:1px;background:#5a8ad6"></div>
<div class="a" style="left:611px;top:536px;width:476px;height:1px;background:#5a8ad6"></div>
<div class="a" style="left:611px;top:567px;width:476px;height:1px;background:#5a8ad6"></div>
<div class="a" style="left:128px;top:591px;width:476px;height:2px;background:#5a82c4"></div>
<div class="a" style="left:611px;top:591px;width:476px;height:1px;background:#5a8ad6"></div>
<div class="a" style="left:603px;top:223px;width:1px;height:658px;background:#5a8ad6"></div>
<div class="a" style="left:611px;top:223px;width:1px;height:658px;background:#5a8ad6"></div>
<div class="a" style="left:128px;top:880px;width:476px;height:1px;background:#5a8ad6"></div>
<div class="a" style="left:128px;top:567px;width:1px;height:314px;background:#5a86cc"></div>
<svg class="a" style="left:136px;top:242px" width="17" height="11" viewBox="0 0 17 11"><rect x="0" y="3" width="17" height="5" fill="#fff"/><rect x="1.6" y="3.2" width="8" height="5" rx="2.5" fill="#a8d4ff" stroke="#2c56aa" stroke-width="1.6"/><rect x="6.4" y="3.2" width="8" height="5" rx="2.5" fill="none" stroke="#2c56aa" stroke-width="1.6"/><path d="M6.5 3.2H7.2A2.5 2.5 0 0 1 9.6 5.7" fill="none" stroke="#2c56aa" stroke-width="1.6"/></svg>
<svg class="a" style="left:619px;top:242px" width="17" height="11" viewBox="0 0 17 11"><rect x="0" y="3" width="17" height="5" fill="#fff"/><rect x="1.6" y="3.2" width="8" height="5" rx="2.5" fill="#a8d4ff" stroke="#2c56aa" stroke-width="1.6"/><rect x="6.4" y="3.2" width="8" height="5" rx="2.5" fill="none" stroke="#2c56aa" stroke-width="1.6"/><path d="M6.5 3.2H7.2A2.5 2.5 0 0 1 9.6 5.7" fill="none" stroke="#2c56aa" stroke-width="1.6"/></svg>
<div class="t" style="left:129px;top:223px;font-size:12.6px;color:#151515;letter-spacing:0px;margin-top:1px">Вставка<span style="color:#5a5a5a">·</span>из<span style="color:#5a5a5a">·</span>файла<span style="color:#5a5a5a">·</span>«01<span style="color:#5a5a5a">·</span>Из<span style="color:#5a5a5a">·</span>Excel<span style="color:#5a5a5a">·</span>2010.bmp»<span style="color:#6f95d8;font-size:11px;margin-left:-2px">#</span></div>
<div class="t" style="left:612px;top:223px;font-size:12.6px;color:#151515;letter-spacing:0px;margin-top:1px">Вставка<span style="color:#5a5a5a">·</span>из<span style="color:#5a5a5a">·</span>файла<span style="color:#5a5a5a">·</span>«02<span style="color:#5a5a5a">·</span>Из<span style="color:#5a5a5a">·</span>PowerPoint<span style="color:#5a5a5a">·</span>2010.bmp»<span style="color:#6f95d8;font-size:11px;margin-left:-2px">#</span></div>
<div class="t" style="left:129px;top:568px;font-size:12.6px;color:#151515;letter-spacing:0px;margin-top:1px">Скопировать-вставить<span style="color:#5a5a5a">·</span>из<span style="color:#5a5a5a">·</span>Excel<span style="color:#5a5a5a">·</span>2010<span style="color:#6f95d8;font-size:11px;margin-left:-2px">#</span></div>
<div class="a" style="left:125px;top:589px;width:7px;height:7px;background:#fff;border:1px solid #4f78c0"></div>
<div class="a" style="left:363px;top:589px;width:7px;height:7px;background:#fff;border:1px solid #4f78c0"></div>
<div class="a" style="left:125px;top:733px;width:7px;height:7px;background:#fff;border:1px solid #4f78c0"></div>
<div class="a" style="left:125px;top:878px;width:7px;height:7px;background:#fff;border:1px solid #4f78c0"></div>
<div class="a" style="left:363px;top:878px;width:7px;height:7px;background:#fff;border:1px solid #4f78c0"></div>
<div class="a" style="left:601px;top:878px;width:7px;height:7px;background:#fff;border:1px solid #4f78c0"></div>
<div class="a" style="left:505px;top:589px;width:7px;height:7px;background:#4a8ae0"></div>
<svg class="a" style="left:340px;top:710px" width="52" height="52" viewBox="0 0 52 52"><circle cx="26" cy="26" r="24.4" fill="rgba(255,255,255,0.38)" stroke="rgba(90,90,90,0.35)" stroke-width="1"/><circle cx="26" cy="26" r="10.2" fill="rgba(150,80,80,0.55)" stroke="#6a3030" stroke-width="1"/></svg>
<div class="a" style="left:536px;top:272px;width:352px;height:590px;background:rgba(0,0,0,0.28);filter:blur(1.6px)"></div>
<div class="a" style="left:533px;top:269px;width:352px;height:590px;background:#f0f0f0;border:1px solid #c6c6c6"></div>
<div class="t" style="left:568px;top:278px;font-size:11.9px;color:#141414">Вырезать</div>
<div class="t" style="right:416px;top:278px;font-size:11.9px;color:#141414;text-align:right">Ctrl+X</div>
<div class="t" style="left:568px;top:300px;font-size:11.9px;color:#141414">Скопировать</div>
<div class="t" style="right:416px;top:300px;font-size:11.9px;color:#141414;text-align:right">Ctrl+C</div>
<div class="t" style="left:568px;top:322px;font-size:11.9px;color:#141414">Вставить</div>
<div class="t" style="right:416px;top:322px;font-size:11.9px;color:#141414;text-align:right">Ctrl+V</div>
<div class="a" style="left:536px;top:338px;width:346px;height:22px;background:#91c9f7"></div>
<div class="t" style="left:568px;top:344px;font-size:11.9px;color:#141414">Вставить в</div>
<div class="t" style="right:416px;top:344px;font-size:11.9px;color:#141414;text-align:right">Ctrl+Alt+V</div>
<div class="t" style="left:568px;top:366px;font-size:11.9px;color:#141414">Вставить на место</div>
<div class="t" style="right:416px;top:366px;font-size:11.9px;color:#141414;text-align:right">Ctrl+Alt+Shift+V</div>
<div class="t" style="left:568px;top:388px;font-size:11.9px;color:#141414">Поиск в Adobe Stock...</div>
<div class="a" style="left:566px;top:407px;width:315px;height:1px;background:#d8d8d8"></div>
<div class="t" style="left:568px;top:417px;font-size:11.9px;color:#141414">Масштаб</div>
<svg class="a" style="left:868px;top:417px" width="6" height="10" viewBox="0 0 6 10"><path d="M1 1L5 5L1 9" fill="none" stroke="#444" stroke-width="1.1"/></svg>
<div class="a" style="left:566px;top:436px;width:315px;height:1px;background:#d8d8d8"></div>
<div class="t" style="left:568px;top:446px;font-size:11.9px;color:#141414">Трансформировать</div>
<svg class="a" style="left:868px;top:446px" width="6" height="10" viewBox="0 0 6 10"><path d="M1 1L5 5L1 9" fill="none" stroke="#444" stroke-width="1.1"/></svg>
<div class="t" style="left:568px;top:468px;font-size:11.9px;color:#141414">Упорядочить</div>
<svg class="a" style="left:868px;top:468px" width="6" height="10" viewBox="0 0 6 10"><path d="M1 1L5 5L1 9" fill="none" stroke="#444" stroke-width="1.1"/></svg>
<div class="t" style="left:568px;top:490px;font-size:11.9px;color:#141414">Выделить</div>
<svg class="a" style="left:868px;top:490px" width="6" height="10" viewBox="0 0 6 10"><path d="M1 1L5 5L1 9" fill="none" stroke="#444" stroke-width="1.1"/></svg>
<div class="a" style="left:566px;top:509px;width:315px;height:1px;background:#d8d8d8"></div>
<div class="t" style="left:568px;top:519px;font-size:11.9px;color:#141414">Заблокировать</div>
<div class="t" style="right:416px;top:519px;font-size:11.9px;color:#141414;text-align:right">Ctrl+L</div>
<div class="t" style="left:568px;top:541px;font-size:11.9px;color:#141414">Скрыть</div>
<div class="t" style="right:416px;top:541px;font-size:11.9px;color:#141414;text-align:right">Ctrl+3</div>
<div class="t" style="left:568px;top:563px;font-size:11.9px;color:#141414">Толщина линии</div>
<svg class="a" style="left:868px;top:563px" width="6" height="10" viewBox="0 0 6 10"><path d="M1 1L5 5L1 9" fill="none" stroke="#444" stroke-width="1.1"/></svg>
<div class="a" style="left:566px;top:582px;width:315px;height:1px;background:#d8d8d8"></div>
<div class="t" style="left:568px;top:592px;font-size:11.9px;color:#141414">Подгонка</div>
<svg class="a" style="left:868px;top:592px" width="6" height="10" viewBox="0 0 6 10"><path d="M1 1L5 5L1 9" fill="none" stroke="#444" stroke-width="1.1"/></svg>
<div class="a" style="left:566px;top:611px;width:315px;height:1px;background:#d8d8d8"></div>
<div class="t" style="left:568px;top:621px;font-size:11.9px;color:#141414">Эффекты</div>
<svg class="a" style="left:868px;top:621px" width="6" height="10" viewBox="0 0 6 10"><path d="M1 1L5 5L1 9" fill="none" stroke="#444" stroke-width="1.1"/></svg>
<div class="t" style="left:568px;top:643px;font-size:11.9px;color:#141414">Подписи</div>
<svg class="a" style="left:868px;top:643px" width="6" height="10" viewBox="0 0 6 10"><path d="M1 1L5 5L1 9" fill="none" stroke="#444" stroke-width="1.1"/></svg>
<div class="t" style="left:568px;top:665px;font-size:11.9px;color:#141414">Гиперссылки</div>
<svg class="a" style="left:868px;top:665px" width="6" height="10" viewBox="0 0 6 10"><path d="M1 1L5 5L1 9" fill="none" stroke="#444" stroke-width="1.1"/></svg>
<div class="t" style="left:568px;top:687px;font-size:11.9px;color:#141414">Интерактивные элементы</div>
<svg class="a" style="left:868px;top:687px" width="6" height="10" viewBox="0 0 6 10"><path d="M1 1L5 5L1 9" fill="none" stroke="#444" stroke-width="1.1"/></svg>
<div class="t" style="left:568px;top:709px;font-size:11.9px;color:#141414">Параметры экспорта объекта...</div>
<div class="t" style="left:568px;top:731px;font-size:11.9px;color:#141414">Создать QR-код...</div>
<div class="a" style="left:566px;top:750px;width:315px;height:1px;background:#d8d8d8"></div>
<div class="t" style="left:568px;top:760px;font-size:11.9px;color:#141414">Задать тег для фрейма</div>
<svg class="a" style="left:868px;top:760px" width="6" height="10" viewBox="0 0 6 10"><path d="M1 1L5 5L1 9" fill="none" stroke="#444" stroke-width="1.1"/></svg>
<div class="t" style="left:568px;top:782px;font-size:11.9px;color:#141414">Автотег</div>
<div class="a" style="left:566px;top:801px;width:315px;height:1px;background:#d8d8d8"></div>
<div class="t" style="left:568px;top:811px;font-size:11.9px;color:#141414">Режим отображения</div>
<svg class="a" style="left:868px;top:811px" width="6" height="10" viewBox="0 0 6 10"><path d="M1 1L5 5L1 9" fill="none" stroke="#444" stroke-width="1.1"/></svg>
<div class="a" style="left:566px;top:830px;width:315px;height:1px;background:#d8d8d8"></div>
<div class="t" style="left:568px;top:840px;font-size:11.9px;color:#141414">InCopy</div>
<svg class="a" style="left:868px;top:840px" width="6" height="10" viewBox="0 0 6 10"><path d="M1 1L5 5L1 9" fill="none" stroke="#444" stroke-width="1.1"/></svg>
</body></html>
